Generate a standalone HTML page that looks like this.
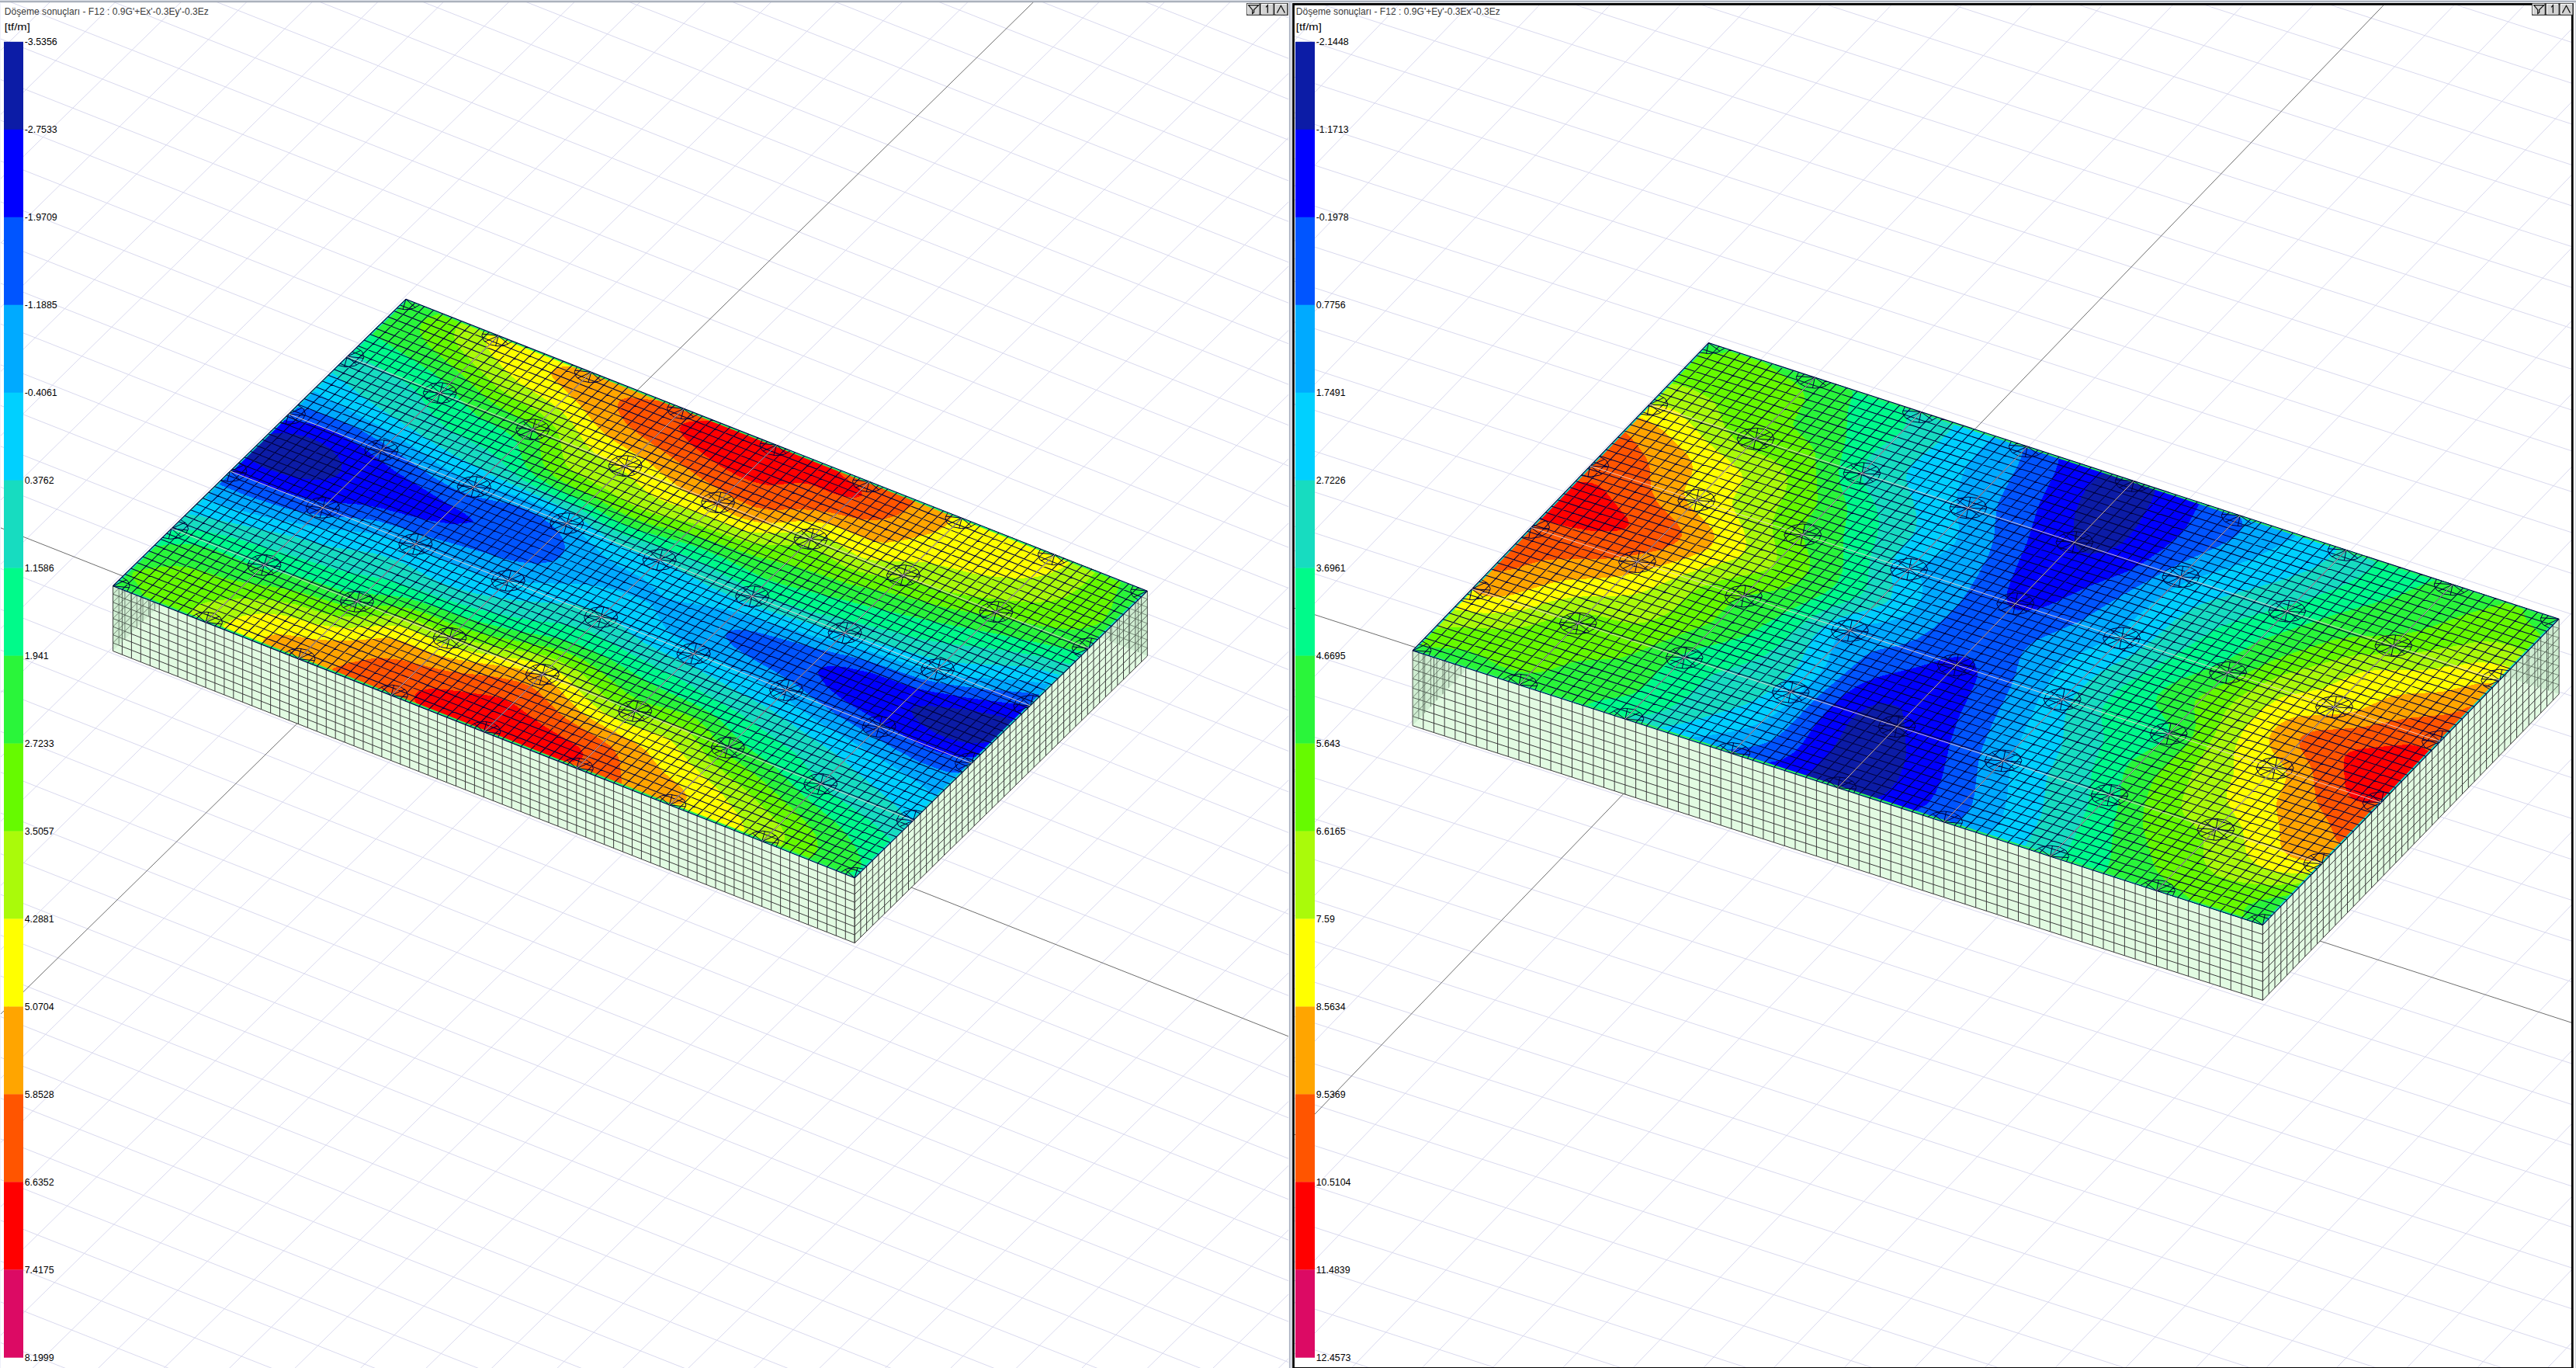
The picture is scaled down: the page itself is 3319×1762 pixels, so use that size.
<!DOCTYPE html><html><head><meta charset="utf-8"><title>Döşeme sonuçları</title><style>html,body{margin:0;padding:0;background:#fff;overflow:hidden}svg{display:block}</style></head><body><svg width="3319" height="1762" viewBox="0 0 3319 1762" font-family="'Liberation Sans', sans-serif">
<rect width="3319" height="1762" fill="#fff"/>
<clipPath id="cL"><rect x="1" y="3" width="1659" height="1759"/></clipPath>
<g clip-path="url(#cL)">
<path d="M37.9 -2454.2L-4544.3 2034.4M98.1 -2430.5L-4484.1 2058.1M158.3 -2406.7L-4423.9 2081.9M218.5 -2382.9L-4363.7 2105.7M278.8 -2359.2L-4303.4 2129.4M339 -2335.4L-4243.2 2153.2M399.2 -2311.6L-4183 2177M459.4 -2287.9L-4122.8 2200.8M519.6 -2264.1L-4062.6 2224.5M579.8 -2240.3L-4002.4 2248.3M640.1 -2216.5L-3942.1 2272.1M700.3 -2192.8L-3881.9 2295.8M760.5 -2169L-3821.7 2319.6M820.7 -2145.2L-3761.5 2343.4M880.9 -2121.5L-3701.3 2367.1M941.2 -2097.7L-3641.1 2390.9M1001.4 -2073.9L-3580.8 2414.7M1061.6 -2050.2L-3520.6 2438.5M1121.8 -2026.4L-3460.4 2462.2M1182 -2002.6L-3400.2 2486M1242.2 -1978.8L-3340 2509.8M1302.5 -1955.1L-3279.7 2533.5M1362.7 -1931.3L-3219.5 2557.3M1422.9 -1907.5L-3159.3 2581.1M1483.1 -1883.8L-3099.1 2604.8M1543.3 -1860L-3038.9 2628.6M1603.5 -1836.2L-2978.7 2652.4M1663.8 -1812.5L-2918.4 2676.2M1724 -1788.7L-2858.2 2699.9M1784.2 -1764.9L-2798 2723.7M1844.4 -1741.1L-2737.8 2747.5M1904.6 -1717.4L-2677.6 2771.2M1964.8 -1693.6L-2617.4 2795M2025.1 -1669.8L-2557.1 2818.8M2085.3 -1646.1L-2496.9 2842.5M2145.5 -1622.3L-2436.7 2866.3M2205.7 -1598.5L-2376.5 2890.1M2265.9 -1574.8L-2316.3 2913.9M2326.1 -1551L-2256.1 2937.6M2386.4 -1527.2L-2195.8 2961.4M2446.6 -1503.4L-2135.6 2985.2M2506.8 -1479.7L-2075.4 3008.9M2567 -1455.9L-2015.2 3032.7M2627.2 -1432.1L-1955 3056.5M2687.4 -1408.4L-1894.8 3080.2M2807.9 -1360.8L-1774.3 3127.8M2868.1 -1337.1L-1714.1 3151.6M2928.3 -1313.3L-1653.9 3175.3M2988.5 -1289.5L-1593.7 3199.1M3048.7 -1265.7L-1533.5 3222.9M3109 -1242L-1473.2 3246.6M3169.2 -1218.2L-1413 3270.4M3229.4 -1194.4L-1352.8 3294.2M3289.6 -1170.7L-1292.6 3317.9M3349.8 -1146.9L-1232.4 3341.7M3410 -1123.1L-1172.2 3365.5M3470.3 -1099.4L-1111.9 3389.2M3530.5 -1075.6L-1051.7 3413M3590.7 -1051.8L-991.5 3436.8M3650.9 -1028L-931.3 3460.6M3711.1 -1004.3L-871.1 3484.3M3771.3 -980.5L-810.9 3508.1M3831.6 -956.7L-750.6 3531.9M3891.8 -933L-690.4 3555.6M3952 -909.2L-630.2 3579.4M4012.2 -885.4L-570 3603.2M4072.4 -861.7L-509.8 3627M4132.7 -837.9L-449.5 3650.7M4192.9 -814.1L-389.3 3674.5M4253.1 -790.3L-329.1 3698.3M4313.3 -766.6L-268.9 3722M4373.5 -742.8L-208.7 3745.8M4433.7 -719L-148.5 3769.6M4494 -695.3L-88.2 3793.3M4554.2 -671.5L-28 3817.1M4614.4 -647.7L32.2 3840.9M4674.6 -624L92.4 3864.7M4734.8 -600.2L152.6 3888.4M4795 -576.4L212.8 3912.2M4855.3 -552.6L273.1 3936M4915.5 -528.9L333.3 3959.7M4975.7 -505.1L393.5 3983.5M5035.9 -481.3L453.7 4007.3M5096.1 -457.6L513.9 4031M5156.3 -433.8L574.1 4054.8M5216.6 -410L634.4 4078.6M5276.8 -386.2L694.6 4102.4M5337 -362.5L754.8 4126.1M5397.2 -338.7L815 4149.9M5457.4 -314.9L875.2 4173.7M37.9 -2454.2L5457.4 -314.9M-0.3 -2416.8L5419.2 -277.5M-38.5 -2379.4L5381.1 -240.1M-76.7 -2342L5342.9 -202.7M-114.8 -2304.6L5304.7 -165.3M-153 -2267.2L5266.5 -127.9M-191.2 -2229.8L5228.3 -90.5M-229.4 -2192.4L5190.1 -53.1M-267.6 -2155L5151.9 -15.7M-305.8 -2117.6L5113.8 21.7M-344 -2080.2L5075.6 59.1M-382.1 -2042.8L5037.4 96.5M-420.3 -2005.4L4999.2 133.9M-458.5 -1968L4961 171.3M-496.7 -1930.6L4922.8 208.7M-534.9 -1893.2L4884.6 246.1M-573.1 -1855.8L4846.5 283.5M-611.2 -1818.4L4808.3 320.9M-649.4 -1781L4770.1 358.4M-687.6 -1743.5L4731.9 395.8M-725.8 -1706.1L4693.7 433.2M-764 -1668.7L4655.5 470.6M-802.2 -1631.3L4617.4 508M-840.4 -1593.9L4579.2 545.4M-878.5 -1556.5L4541 582.8M-916.7 -1519.1L4502.8 620.2M-954.9 -1481.7L4464.6 657.6M-993.1 -1444.3L4426.4 695M-1031.3 -1406.9L4388.2 732.4M-1069.5 -1369.5L4350.1 769.8M-1107.7 -1332.1L4311.9 807.2M-1145.8 -1294.7L4273.7 844.6M-1184 -1257.3L4235.5 882M-1222.2 -1219.9L4197.3 919.4M-1260.4 -1182.5L4159.1 956.8M-1298.6 -1145.1L4120.9 994.2M-1336.8 -1107.7L4082.8 1031.6M-1374.9 -1070.3L4044.6 1069M-1413.1 -1032.9L4006.4 1106.5M-1451.3 -995.4L3968.2 1143.9M-1489.5 -958L3930 1181.3M-1527.7 -920.6L3891.8 1218.7M-1565.9 -883.2L3853.7 1256.1M-1604.1 -845.8L3815.5 1293.5M-1642.2 -808.4L3777.3 1330.9M-1680.4 -771L3739.1 1368.3M-1718.6 -733.6L3700.9 1405.7M-1756.8 -696.2L3662.7 1443.1M-1795 -658.8L3624.5 1480.5M-1833.2 -621.4L3586.4 1517.9M-1871.4 -584L3548.2 1555.3M-1909.5 -546.6L3510 1592.7M-1947.7 -509.2L3471.8 1630.1M-1985.9 -471.8L3433.6 1667.5M-2024.1 -434.4L3395.4 1704.9M-2062.3 -397L3357.2 1742.3M-2100.5 -359.6L3319.1 1779.7M-2138.6 -322.2L3280.9 1817.1M-2176.8 -284.8L3242.7 1854.6M-2215 -247.3L3204.5 1892M-2291.4 -172.5L3128.1 1966.8M-2329.6 -135.1L3090 2004.2M-2367.8 -97.7L3051.8 2041.6M-2405.9 -60.3L3013.6 2079M-2444.1 -22.9L2975.4 2116.4M-2482.3 14.5L2937.2 2153.8M-2520.5 51.9L2899 2191.2M-2558.7 89.3L2860.8 2228.6M-2596.9 126.7L2822.7 2266M-2635.1 164.1L2784.5 2303.4M-2673.2 201.5L2746.3 2340.8M-2711.4 238.9L2708.1 2378.2M-2749.6 276.3L2669.9 2415.6M-2787.8 313.7L2631.7 2453M-2826 351.1L2593.5 2490.4M-2864.2 388.5L2555.4 2527.8M-2902.3 425.9L2517.2 2565.2M-2940.5 463.3L2479 2602.7M-2978.7 500.8L2440.8 2640.1M-3016.9 538.2L2402.6 2677.5M-3055.1 575.6L2364.4 2714.9M-3093.3 613L2326.3 2752.3M-3131.5 650.4L2288.1 2789.7M-3169.6 687.8L2249.9 2827.1M-3207.8 725.2L2211.7 2864.5M-3246 762.6L2173.5 2901.9M-3284.2 800L2135.3 2939.3M-3322.4 837.4L2097.1 2976.7M-3360.6 874.8L2059 3014.1M-3398.8 912.2L2020.8 3051.5M-3436.9 949.6L1982.6 3088.9M-3475.1 987L1944.4 3126.3M-3513.3 1024.4L1906.2 3163.7M-3551.5 1061.8L1868 3201.1M-3589.7 1099.2L1829.8 3238.5M-3627.9 1136.6L1791.7 3275.9M-3666.1 1174L1753.5 3313.3M-3704.2 1211.5L1715.3 3350.8M-3742.4 1248.9L1677.1 3388.2M-3780.6 1286.3L1638.9 3425.6M-3818.8 1323.7L1600.7 3463M-3857 1361.1L1562.6 3500.4M-3895.2 1398.5L1524.4 3537.8M-3933.3 1435.9L1486.2 3575.2M-3971.5 1473.3L1448 3612.6M-4009.7 1510.7L1409.8 3650M-4047.9 1548.1L1371.6 3687.4M-4086.1 1585.5L1333.4 3724.8M-4124.3 1622.9L1295.3 3762.2M-4162.5 1660.3L1257.1 3799.6M-4200.6 1697.7L1218.9 3837M-4238.8 1735.1L1180.7 3874.4M-4277 1772.5L1142.5 3911.8M-4315.2 1809.9L1104.3 3949.2M-4353.4 1847.3L1066.1 3986.6M-4391.6 1884.7L1028 4024M-4429.8 1922.1L989.8 4061.4M-4467.9 1959.6L951.6 4098.9M-4506.1 1997L913.4 4136.3M-4544.3 2034.4L875.2 4173.7" stroke="#d9d9ee" stroke-width="1" fill="none"/>
<path d="M2747.7 -1384.6L-1834.5 3104M-2253.2 -209.9L3166.3 1929.4" stroke="#6e6e6e" stroke-width="1" fill="none"/>
<polygon points="145.5,754.7 1101.2,1130.8 1101.2,1214.6 145.5,838.5" fill="#e0fbe0" fill-opacity="0.93"/>
<polygon points="1101.2,1130.8 1478.3,761.2 1478.3,845 1101.2,1214.6" fill="#e0fbe0" fill-opacity="0.93"/>
<path d="M145.5 754.7v83.8M157.4 759.4v83.8M169.4 764.1v83.8M181.3 768.8v83.8M193.3 773.5v83.8M205.2 778.2v83.8M217.2 782.9v83.8M229.1 787.6v83.8M241.1 792.3v83.8M253 797v83.8M265 801.7v83.8M276.9 806.4v83.8M288.9 811.1v83.8M300.8 815.8v83.8M312.7 820.5v83.8M324.7 825.2v83.8M336.6 829.9v83.8M348.6 834.6v83.8M360.5 839.3v83.8M372.5 844v83.8M384.4 848.7v83.8M396.4 853.4v83.8M408.3 858.1v83.8M420.3 862.8v83.8M432.2 867.5v83.8M444.2 872.2v83.8M456.1 876.9v83.8M468 881.6v83.8M480 886.3v83.8M491.9 891v83.8M503.9 895.7v83.8M515.8 900.4v83.8M527.8 905.1v83.8M539.7 909.8v83.8M551.7 914.5v83.8M563.6 919.2v83.8M575.6 923.9v83.8M587.5 928.6v83.8M599.5 933.3v83.8M611.4 938v83.8M623.4 942.8v83.8M635.3 947.5v83.8M647.2 952.2v83.8M659.2 956.9v83.8M671.1 961.6v83.8M683.1 966.3v83.8M695 971v83.8M707 975.7v83.8M718.9 980.4v83.8M730.9 985.1v83.8M742.8 989.8v83.8M754.8 994.5v83.8M766.7 999.2v83.8M778.7 1003.9v83.8M790.6 1008.6v83.8M802.5 1013.3v83.8M814.5 1018v83.8M826.4 1022.7v83.8M838.4 1027.4v83.8M850.3 1032.1v83.8M862.3 1036.8v83.8M874.2 1041.5v83.8M886.2 1046.2v83.8M898.1 1050.9v83.8M910.1 1055.6v83.8M922 1060.3v83.8M934 1065v83.8M945.9 1069.7v83.8M957.8 1074.4v83.8M969.8 1079.1v83.8M981.7 1083.8v83.8M993.7 1088.5v83.8M1005.6 1093.2v83.8M1017.6 1097.9v83.8M1029.5 1102.6v83.8M1041.5 1107.3v83.8M1053.4 1112v83.8M1065.4 1116.7v83.8M1077.3 1121.4v83.8M1089.3 1126.1v83.8M1101.2 1130.8v83.8M1101.2 1130.8v83.8M1108.9 1123.3v83.8M1116.6 1115.7v83.8M1124.3 1108.2v83.8M1132 1100.6v83.8M1139.7 1093.1v83.8M1147.4 1085.5v83.8M1155.1 1078v83.8M1162.8 1070.5v83.8M1170.5 1062.9v83.8M1178.2 1055.4v83.8M1185.9 1047.8v83.8M1193.6 1040.3v83.8M1201.2 1032.7v83.8M1208.9 1025.2v83.8M1216.6 1017.7v83.8M1224.3 1010.1v83.8M1232 1002.6v83.8M1239.7 995v83.8M1247.4 987.5v83.8M1255.1 979.9v83.8M1262.8 972.4v83.8M1270.5 964.9v83.8M1278.2 957.3v83.8M1285.9 949.8v83.8M1293.6 942.2v83.8M1301.3 934.7v83.8M1309 927.1v83.8M1316.7 919.6v83.8M1324.4 912.1v83.8M1332.1 904.5v83.8M1339.8 897v83.8M1347.5 889.4v83.8M1355.2 881.9v83.8M1362.9 874.3v83.8M1370.6 866.8v83.8M1378.3 859.3v83.8M1385.9 851.7v83.8M1393.6 844.2v83.8M1401.3 836.6v83.8M1409 829.1v83.8M1416.7 821.5v83.8M1424.4 814v83.8M1432.1 806.5v83.8M1439.8 798.9v83.8M1447.5 791.4v83.8M1455.2 783.8v83.8M1462.9 776.3v83.8M1470.6 768.7v83.8M1478.3 761.2v83.8M145.5 765.2L1101.2 1141.3L1478.3 771.7M145.5 775.7L1101.2 1151.8L1478.3 782.2M145.5 786.1L1101.2 1162.2L1478.3 792.6M145.5 796.6L1101.2 1172.7L1478.3 803.1M145.5 807.1L1101.2 1183.2L1478.3 813.6M145.5 817.6L1101.2 1193.6L1478.3 824.1M145.5 828L1101.2 1204.1L1478.3 834.5M145.5 838.5L1101.2 1214.6L1478.3 845" stroke="#3c3c3c" stroke-width="1" fill="none"/>
<clipPath id="tLb"><polygon points="145.5,754.7 145.5,838.5 206.6,778.7"/></clipPath>
<g clip-path="url(#tLb)">
<polygon points="145.5,754.7 145.5,838.5 206.6,778.7" fill="#9fc8a6" fill-opacity="0.28"/>
<path d="M153.2 747.2v83.8M160.9 739.6v83.8M168.6 732.1v83.8M176.3 724.5v83.8M184 717v83.8M191.7 709.5v83.8M199.4 701.9v83.8M207.1 694.4v83.8M145.5 765.2L221 691.3M145.5 775.7L221 701.8M145.5 786.1L221 712.2M145.5 796.6L221 722.7M145.5 807.1L221 733.2M145.5 817.6L221 743.7M145.5 828L221 754.1" stroke="#4a5a4c" stroke-width="0.9" fill="none" opacity="0.75"/>
</g>
<clipPath id="tLd"><polygon points="1478.3,761.2 1478.3,845 1417.3,821"/></clipPath>
<g clip-path="url(#tLd)">
<polygon points="1478.3,761.2 1478.3,845 1417.3,821" fill="#9fc8a6" fill-opacity="0.28"/>
<path d="M1466.4 756.5v83.8M1454.4 751.8v83.8M1442.5 747.1v83.8M1430.5 742.4v83.8M1418.6 737.7v83.8M1406.6 733v83.8M1394.7 728.3v83.8M1382.8 723.6v83.8M1370.8 718.9v83.8M1358.9 714.2v83.8M1346.9 709.5v83.8M1335 704.8v83.8M1323 700.1v83.8M1311.1 695.4v83.8M1299.2 690.7v83.8M1478.3 771.7L1287.2 696.5M1478.3 782.2L1287.2 707M1478.3 792.6L1287.2 717.4M1478.3 803.1L1287.2 727.9M1478.3 813.6L1287.2 738.4M1478.3 824.1L1287.2 748.9M1478.3 834.5L1287.2 759.3" stroke="#4a5a4c" stroke-width="0.9" fill="none" opacity="0.75"/>
</g>
<g shape-rendering="crispEdges">
<polygon points="522.9,385.3 1478.3,761.2 1101.2,1130.8 145.5,754.7" fill="#0c1ca6"/>
<path d="M523 385l955 376l-171 168l-16-6l-18-4l-29-5l-26-3l-22-2l-16 1l-6 4l3 9l12 11l14 9l15 7l18 5l10 2l19 0l16-3l-180 177l-955-376l170-167l9 6l19 10l25 8l18 4l17 2l15-1l11-2l7-5l3-5l0-7l-4-9l-10-11l-13-8l-16-7l-18-4l-21-1l-13 1l178-174z" fill="#0000ff" fill-rule="evenodd"/>
<path d="M523 385l955 376l-151 148l-79-10l-47-8l-27-6l-50-18l-27-6l-10-2l-20-1l-11 3l-2 6l5 9l9 11l14 11l13 9l77 45l22 11l25 9l18 3l23 0l-159 156l-955-376l150-148l64 25l34 10l29 5l32 2l19 2l19 4l53 14l18 3l18 3l17-1l11-2l-5-6l-7-5l-21-12l-68-42l-38-28l-21-13l-22-11l-25-9l-18-3l-21-2l159-156z" fill="#0055ff" fill-rule="evenodd"/>
<path d="M523 385l955 376l-136 134l-20-3l-62-5l-48-7l-27-6l-67-23l-71-17l-61-17l-16-4l-22-2l-11 3l-2 6l7 10l5 4l18 12l51 29l44 33l20 14l77 45l29 15l16 6l17 6l20 2l-138 135l-955-376l134-132l39 16l51 16l27 6l15 3l56 4l19 3l27 8l44 14l50 14l51 15l19 3l16 1l13-2l10-3l6-5l4-6l1-6l-2-8l-2-4l-3-5l-10-11l-16-11l-15-8l-16-6l-54-12l-24-9l-29-16l-66-45l-28-16l-23-10l-24-10l-16-5l-19-4l142-139z" fill="#00aaff" fill-rule="evenodd"/>
<path d="M523 385l955 376l-123 121l-19-3l-20-3l-73-4l-39-6l-26-8l-58-19l-70-19l-93-29l-27-7l-48-8l-18-4l-8-3l-6-4l-9-9l-14-12l-30-15l-14-9l-12-10l-26-27l-13-11l-13-9l-14-8l-23-10l-25-9l-42-13l-23-10l-22-12l-46-31l-27-17l-95-50l121-118zM767 754l13 3l17 4l25 9l15 7l5 6l12 21l6 8l11 8l21 13l87 46l21 12l52 37l62 37l44 27l28 18l17 14l3 4l-105 103l-955-376l117-115l14 7l17 6l44 12l74 15l60 6l27 6l33 12l70 30l26 8l17 4l20 3l20 2l55 1l27 2z" fill="#00d0ff" fill-rule="evenodd"/>
<path d="M523 385l955 376l-110 109l-27-7l-22-4l-27-2l-59-3l-33-6l-164-47l-42-13l-41-15l-38-17l-50-28l-15-7l-41-14l-16-7l-13-9l-32-23l-21-13l-22-11l-69-31l-51-27l-21-12l-75-48l-23-16l-39-31l96-94zM741 779l22 5l16 7l13 8l25 20l13 9l67 33l93 51l85 58l78 66l10 12l8 14l-70 69l-955-376l94-93l20 3l109 24l62 16l48 7l18 5l24 9l36 19l15 7l17 6l26 7l47 8l21 2l42 2l16 2z" fill="#17dcc0" fill-rule="evenodd"/>
<path d="M523 385l955 376l-97 95l-44-11l-28-5l-34-5l-46-5l-38-6l-71-18l-73-18l-32-10l-25-9l-30-14l-50-27l-23-11l-24-9l-43-13l-16-6l-14-7l-48-30l-52-25l-15-8l-17-13l-19-18l-12-9l-37-19l-9-5l-11-8l-6-6l-9-10l-13-19l-6-8l-12-10l-20-13l-52-27l71-69zM740 807l17 5l15 7l42 24l59 30l80 46l69 49l11 11l22 29l8 7l12 10l33 22l19 15l22 22l-48 47l-955-376l71-70l13-2l23 0l19 3l27 6l136 42l18 4l38 7l17 4l75 26l34 10l45 10l22 4l37 4l19 4z" fill="#00fa8a" fill-rule="evenodd"/>
<path d="M523 385l955 376l-80 78l-8-1l-29-5l-64-14l-93-18l-73-17l-63-16l-52-13l-17-5l-16-6l-52-26l-31-13l-26-8l-44-12l-16-5l-23-11l-35-21l-44-21l-21-13l-6-5l-8-9l-4-9l-6-19l-4-7l-6-5l-8-6l-27-14l-7-4l-12-11l-24-26l-20-18l-20-13l-61-39l45-44zM747 831l17 7l15 7l70 41l46 21l21 11l17 14l17 19l11 10l39 28l33 34l48 40l10 12l10 14l8 17l1 7l-3 6l-9 4l-10 2l-942-370l51-51l26-3l22 0l10 1l18 5l16 6l31 13l16 6l54 12l51 17l19 3l42 3l22 3l23 7l49 17l26 8l36 9l65 12l24 8z" fill="#2af53a" fill-rule="evenodd"/>
<path d="M568 403l877 345l-5 12l-9 25l-7 11l-5 5l-7 4l-10 3l-19 3l-11-1l-27-3l-58-12l-47-8l-28-6l-52-14l-63-14l-67-22l-55-14l-81-28l-54-13l-25-9l-15-7l-35-20l-37-18l-14-8l-11-11l-4-8l-2-8l-2-21l-3-8l-4-6l-6-6l-6-4l-36-20l-13-9l-34-32l-39-34l-9-11l-2-5l-2-3l0-7l3-6l6-5l18-7zM694 831l18 4l17 5l23 10l20 13l36 30l14 8l16 6l27 7l17 5l15 7l6 5l11 11l14 19l11 12l32 23l12 10l51 48l11 13l6 9l1 4l1 4l1 7l-2 6l-4 6l-7 4l-855-336l-7-16l-9-12l1-6l10-3l26-4l16-1l14 1l19 4l34 11l18 4l58 9l18 4l42 13l18 5l21 1l34-1l19 2l10 2l18 5l47 19l17 5l27 7l57 11z" fill="#66fa00" fill-rule="evenodd"/>
<path d="M597 415l816 320l-15 16l-11 9l-14 9l-9 3l-11 3l-23 1l-35-3l-36-4l-29-5l-60-17l-49-7l-18-5l-16-6l-35-21l-7-3l-9-2l-11-1l-35 0l-27-4l-17-5l-50-18l-53-13l-17-6l-14-7l-35-21l-29-15l-14-9l-4-4l-4-9l-4-22l-2-8l-4-9l-8-10l-12-10l-42-24l-13-9l-31-30l-19-22l-5-9l-1-7l2-7l4-5l6-4zM681 840l21 4l16 6l22 11l13 9l22 23l11 10l14 9l7 4l16 6l46 10l14 7l12 11l13 20l10 12l42 35l34 33l10 12l3 4l4 8l0 7l-3 6l-5 5l-761-299l4-6l5-5l8-4l10-3l12-2l31-2l39 2l28 5l42 13l19 3l22 0l35-1l21 1l18 5l47 20l16 5l28 6l54 10z" fill="#aafa0a" fill-rule="evenodd"/>
<path d="M632 428l749 295l-13 9l-17 7l-10 3l-12 2l-18 1l-26-2l-30-4l-44-11l-19-4l-64-2l-18-4l-8-4l-34-21l-16-6l-21-2l-43 2l-23-2l-17-5l-48-19l-42-14l-15-7l-7-4l-30-27l-40-25l-11-11l-17-27l-8-9l-8-8l-12-10l-41-26l-17-15l-18-21l-6-9l-2-8l0-3l1-4l5-5zM669 849l23 5l16 5l8 4l15 10l31 33l19 14l22 11l50 16l8 4l6 5l24 29l27 25l11 11l8 10l15 20l5 9l2 8l-2 6l-671-264l4-6l6-4l8-4l10-3l13-2l16-1l25 3l40 11l19 3l21 2l41-3l17 0l10 1l17 6l38 17l17 5l28 6l53 8z" fill="#ffff00" fill-rule="evenodd"/>
<path d="M726 472l19 1l483 190l-7 11l-5 5l-7 4l-9 4l-32 8l-12 2l-15 2l-11-1l-9-2l-39-16l-17-6l-10-1l-21-2l-47 3l-19-3l-17-5l-52-26l-22-11l-13-10l-30-25l-13-8l-28-17l-13-9l-11-11l-25-31l-31-30l-4-8l5-5l12-3zM662 860l28 7l15 7l12 10l21 23l11 11l21 13l49 26l14 10l19 25l27 23l6 10l-1 6l-7 5l-15 1l-524-206l1-7l5-5l12-2l16 1l38 6l21 1l23 0l36-3l11 0l18 4l40 16l17 5l28 5l58 8z" fill="#ffa500" fill-rule="evenodd"/>
<path d="M831 514l30 4l318 126l-3 5l-5 5l-14 9l-8 3l-11 3l-13 1l-20-2l-36-8l-20-3l-21-1l-35 1l-17-3l-10-3l-23-11l-41-25l-45-32l-33-23l-16-13l-8-11l-4-8l0-7l3-6l11-3l21 2zM640 872l28 6l16 6l12 9l22 23l12 10l42 25l13 9l7 7l5 9l2 8l1 16l2 13l-377-148l6-5l19-6l24-5l14-2l9 1l20 2l36 9l27 6l60 7z" fill="#ff5500" fill-rule="evenodd"/>
<path d="M902 542l18 0l158 62l0 2l6 6l25 18l2 8l-9 3l-13-1l-17-5l-24-10l-8-2l-11-1l-25 2l-11 1l-10-1l-18-5l-16-7l-20-11l-20-14l-19-15l-11-12l-4-8l4-6l9-3l14-1zM625 895l20 4l16 7l38 28l42 25l6 4l4 7l1 2l-3 6l-11 3l-24-3l-176-69l-4-8l1-7l6-5l4 0l9-2l19 1l52 7z" fill="#ff0000" fill-rule="evenodd"/>
</g>
<clipPath id="pL"><polygon points="522.9,385.3 1478.3,761.2 1101.2,1130.8 145.5,754.7"/></clipPath>
<g clip-path="url(#pL)">
<path d="M145.5 754.7L1101.2 1130.8" stroke="#35f04a" stroke-width="5.5" fill="none"/>
<path d="M522.9 385.3L1478.3 761.2" stroke="#35f04a" stroke-width="4.5" fill="none"/>
<path d="M522.9 385.3L145.5 754.7" stroke="#19d8c8" stroke-width="4" fill="none"/>
<path d="M1478.3 761.2L1101.2 1130.8" stroke="#19d8c8" stroke-width="4.5" fill="none"/>
<path d="M145.5 754.7L1101.2 1130.8" stroke="#00c8f0" stroke-width="2" fill="none"/>
<path d="M522.9 385.3L1478.3 761.2" stroke="#00c8f0" stroke-width="1.6" fill="none"/>
<path d="M541.1 392.4L532.8 397.2L521.8 398.8L511.2 396.8L503.7 391.6L501.3 384.8L504.7 378.2L513 373.4L524 371.8L534.6 373.8L542.1 379L544.5 385.8L541.1 392.4M522.9 385.3L535.2 396.3M522.9 385.3L519.1 398.6M522.9 385.3L505.2 393.2M522.9 385.3L501.6 383.1M522.9 385.3L510.6 374.3M522.9 385.3L526.7 372M522.9 385.3L540.6 377.4M522.9 385.3L544.2 387.5M465.6 466.3L457.3 471.1L446.4 472.7L435.7 470.6L428.2 465.5L425.8 458.7L429.3 452L437.5 447.3L448.5 445.7L459.1 447.7L466.6 452.8L469 459.6L465.6 466.3M447.4 459.2L459.8 470.1M447.4 459.2L443.6 472.5M447.4 459.2L429.7 467.1M447.4 459.2L426.2 457M447.4 459.2L435.1 448.2M447.4 459.2L451.2 445.9M447.4 459.2L465.1 451.3M447.4 459.2L468.7 461.4M390.1 540.2L381.8 545L370.9 546.5L360.2 544.5L352.7 539.4L350.4 532.6L353.8 525.9L362.1 521.1L373 519.6L383.6 521.6L391.1 526.7L393.5 533.5L390.1 540.2M371.9 533.1L384.3 544M371.9 533.1L368.1 546.4M371.9 533.1L354.2 540.9M371.9 533.1L350.7 530.9M371.9 533.1L359.6 522.1M371.9 533.1L375.7 519.7M371.9 533.1L389.7 525.2M371.9 533.1L393.2 535.2M314.6 614.1L306.3 618.9L295.4 620.4L284.8 618.4L277.2 613.3L274.9 606.5L278.3 599.8L286.6 595L297.5 593.5L308.2 595.5L315.7 600.6L318 607.4L314.6 614.1M296.5 606.9L308.8 617.9M296.5 606.9L292.7 620.3M296.5 606.9L278.7 614.8M296.5 606.9L275.2 604.8M296.5 606.9L284.1 596M296.5 606.9L300.3 593.6M296.5 606.9L314.2 599.1M296.5 606.9L317.7 609.1M239.1 688L230.9 692.7L219.9 694.3L209.3 692.3L201.8 687.2L199.4 680.4L202.8 673.7L211.1 668.9L222 667.3L232.7 669.4L240.2 674.5L242.6 681.3L239.1 688M221 680.8L233.3 691.8M221 680.8L217.2 694.1M221 680.8L203.3 688.7M221 680.8L199.7 678.6M221 680.8L208.6 669.9M221 680.8L224.8 667.5M221 680.8L238.7 672.9M221 680.8L242.2 683M163.7 761.8L155.4 766.6L144.4 768.2L133.8 766.2L126.3 761L123.9 754.2L127.3 747.6L135.6 742.8L146.6 741.2L157.2 743.2L164.7 748.4L167.1 755.2L163.7 761.8M145.5 754.7L157.8 765.7M145.5 754.7L141.7 768M145.5 754.7L127.8 762.6M145.5 754.7L124.2 752.5M145.5 754.7L133.2 743.7M145.5 754.7L149.3 741.4M145.5 754.7L163.2 746.8M145.5 754.7L166.8 756.9M660.5 439.4L652.2 444.2L641.3 445.8L630.6 443.7L623.1 438.6L620.8 431.8L624.2 425.1L632.5 420.4L643.4 418.8L654 420.8L661.5 425.9L663.9 432.7L660.5 439.4M642.3 432.3L654.7 443.2M642.3 432.3L638.5 445.6M642.3 432.3L624.6 440.2M642.3 432.3L621.1 430.1M642.3 432.3L630 421.3M642.3 432.3L646.1 419M642.3 432.3L660 424.4M642.3 432.3L663.6 434.5M585 513.3L576.7 518.1L565.8 519.7L555.2 517.6L547.6 512.5L545.3 505.7L548.7 499L557 494.3L567.9 492.7L578.6 494.7L586.1 499.8L588.4 506.6L585 513.3M566.9 506.2L579.2 517.1M566.9 506.2L563 519.5M566.9 506.2L549.1 514M566.9 506.2L545.6 504M566.9 506.2L554.5 495.2M566.9 506.2L570.7 492.9M566.9 506.2L584.6 498.3M566.9 506.2L588.1 508.4M509.5 587.2L501.3 592L490.3 593.5L479.7 591.5L472.2 586.4L469.8 579.6L473.2 572.9L481.5 568.1L492.4 566.6L503.1 568.6L510.6 573.7L513 580.5L509.5 587.2M491.4 580.1L503.7 591M491.4 580.1L487.6 593.4M491.4 580.1L473.7 587.9M491.4 580.1L470.1 577.9M491.4 580.1L479 569.1M491.4 580.1L495.2 566.7M491.4 580.1L509.1 572.2M491.4 580.1L512.6 582.2M434.1 661.1L425.8 665.9L414.9 667.4L404.2 665.4L396.7 660.3L394.3 653.5L397.8 646.8L406 642L417 640.5L427.6 642.5L435.1 647.6L437.5 654.4L434.1 661.1M415.9 653.9L428.3 664.9M415.9 653.9L412.1 667.3M415.9 653.9L398.2 661.8M415.9 653.9L394.6 651.8M415.9 653.9L403.6 643M415.9 653.9L419.7 640.6M415.9 653.9L433.6 646.1M415.9 653.9L437.2 656.1M358.6 735L350.3 739.7L339.4 741.3L328.7 739.3L321.2 734.2L318.9 727.4L322.3 720.7L330.6 715.9L341.5 714.3L352.1 716.4L359.6 721.5L362 728.3L358.6 735M340.4 727.8L352.8 738.8M340.4 727.8L336.6 741.1M340.4 727.8L322.7 735.7M340.4 727.8L319.2 725.6M340.4 727.8L328.1 716.9M340.4 727.8L344.2 714.5M340.4 727.8L358.2 720M340.4 727.8L361.7 730M283.1 808.9L274.8 813.6L263.9 815.2L253.3 813.2L245.8 808.1L243.4 801.3L246.8 794.6L255.1 789.8L266 788.2L276.7 790.3L284.2 795.4L286.5 802.2L283.1 808.9M265 801.7L277.3 812.7M265 801.7L261.2 815M265 801.7L247.2 809.6M265 801.7L243.7 799.5M265 801.7L252.6 790.7M265 801.7L268.8 788.4M265 801.7L282.7 793.8M265 801.7L286.2 803.9M779.9 486.4L771.6 491.2L760.7 492.8L750.1 490.7L742.5 485.6L740.2 478.8L743.6 472.1L751.9 467.4L762.8 465.8L773.4 467.8L781 472.9L783.3 479.7L779.9 486.4M761.8 479.3L774.1 490.2M761.8 479.3L757.9 492.6M761.8 479.3L744 487.2M761.8 479.3L740.5 477.1M761.8 479.3L749.4 468.3M761.8 479.3L765.6 466M761.8 479.3L779.5 471.4M761.8 479.3L783 481.5M704.4 560.3L696.2 565.1L685.2 566.7L674.6 564.6L667.1 559.5L664.7 552.7L668.1 546L676.4 541.3L687.3 539.7L698 541.7L705.5 546.8L707.9 553.6L704.4 560.3M686.3 553.2L698.6 564.1M686.3 553.2L682.5 566.5M686.3 553.2L668.6 561M686.3 553.2L665 551M686.3 553.2L673.9 542.2M686.3 553.2L690.1 539.8M686.3 553.2L704 545.3M686.3 553.2L707.5 555.3M629 634.2L620.7 639L609.8 640.5L599.1 638.5L591.6 633.4L589.2 626.6L592.7 619.9L600.9 615.1L611.9 613.6L622.5 615.6L630 620.7L632.4 627.5L629 634.2M610.8 627.1L623.2 638M610.8 627.1L607 640.4M610.8 627.1L593.1 634.9M610.8 627.1L589.6 624.9M610.8 627.1L598.5 616.1M610.8 627.1L614.6 613.7M610.8 627.1L628.5 619.2M610.8 627.1L632.1 629.2M553.5 708.1L545.2 712.9L534.3 714.4L523.7 712.4L516.1 707.3L513.8 700.5L517.2 693.8L525.5 689L536.4 687.5L547.1 689.5L554.6 694.6L556.9 701.4L553.5 708.1M535.4 700.9L547.7 711.9M535.4 700.9L531.6 714.3M535.4 700.9L517.6 708.8M535.4 700.9L514.1 698.8M535.4 700.9L523 690M535.4 700.9L539.2 687.6M535.4 700.9L553.1 693.1M535.4 700.9L556.6 703.1M478 782L469.8 786.7L458.8 788.3L448.2 786.3L440.7 781.2L438.3 774.4L441.7 767.7L450 762.9L460.9 761.3L471.6 763.4L479.1 768.5L481.5 775.3L478 782M459.9 774.8L472.2 785.8M459.9 774.8L456.1 788.2M459.9 774.8L442.2 782.7M459.9 774.8L438.6 772.7M459.9 774.8L447.5 763.9M459.9 774.8L463.7 761.5M459.9 774.8L477.6 767M459.9 774.8L481.2 777M402.6 855.9L394.3 860.6L383.4 862.2L372.7 860.2L365.2 855.1L362.9 848.3L366.3 841.6L374.5 836.8L385.5 835.2L396.1 837.3L403.6 842.4L406 849.2L402.6 855.9M384.4 848.7L396.8 859.7M384.4 848.7L380.6 862M384.4 848.7L366.7 856.6M384.4 848.7L363.2 846.5M384.4 848.7L372.1 837.8M384.4 848.7L388.2 835.4M384.4 848.7L402.1 840.8M384.4 848.7L405.7 850.9M899.3 533.4L891 538.2L880.1 539.8L869.5 537.7L862 532.6L859.6 525.8L863 519.1L871.3 514.4L882.2 512.8L892.9 514.8L900.4 519.9L902.7 526.7L899.3 533.4M881.2 526.3L893.5 537.2M881.2 526.3L877.4 539.6M881.2 526.3L863.5 534.1M881.2 526.3L859.9 524.1M881.2 526.3L868.8 515.3M881.2 526.3L885 512.9M881.2 526.3L898.9 518.4M881.2 526.3L902.4 528.4M823.9 607.3L815.6 612.1L804.7 613.6L794 611.6L786.5 606.5L784.1 599.7L787.6 593L795.8 588.2L806.8 586.7L817.4 588.7L824.9 593.8L827.3 600.6L823.9 607.3M805.7 600.2L818.1 611.1M805.7 600.2L801.9 613.5M805.7 600.2L788 608M805.7 600.2L784.5 598M805.7 600.2L793.4 589.2M805.7 600.2L809.5 586.8M805.7 600.2L823.4 592.3M805.7 600.2L827 602.3M748.4 681.2L740.1 686L729.2 687.5L718.6 685.5L711.1 680.4L708.7 673.6L712.1 666.9L720.4 662.1L731.3 660.6L742 662.6L749.5 667.7L751.8 674.5L748.4 681.2M730.3 674.1L742.6 685M730.3 674.1L726.5 687.4M730.3 674.1L712.5 681.9M730.3 674.1L709 671.9M730.3 674.1L717.9 663.1M730.3 674.1L734.1 660.7M730.3 674.1L748 666.2M730.3 674.1L751.5 676.2M673 755.1L664.7 759.9L653.8 761.4L643.1 759.4L635.6 754.3L633.2 747.5L636.6 740.8L644.9 736L655.9 734.5L666.5 736.5L674 741.6L676.4 748.4L673 755.1M654.8 747.9L667.1 758.9M654.8 747.9L651 761.3M654.8 747.9L637.1 755.8M654.8 747.9L633.5 745.8M654.8 747.9L642.5 737M654.8 747.9L658.6 734.6M654.8 747.9L672.5 740.1M654.8 747.9L676.1 750.1M597.5 829L589.2 833.8L578.3 835.3L567.6 833.3L560.1 828.2L557.8 821.4L561.2 814.7L569.5 809.9L580.4 808.4L591 810.4L598.6 815.5L600.9 822.3L597.5 829M579.3 821.8L591.7 832.8M579.3 821.8L575.5 835.2M579.3 821.8L561.6 829.7M579.3 821.8L558.1 819.7M579.3 821.8L567 810.9M579.3 821.8L583.1 808.5M579.3 821.8L597.1 814M579.3 821.8L600.6 824M522 902.9L513.8 907.7L502.8 909.2L492.2 907.2L484.7 902.1L482.3 895.3L485.7 888.6L494 883.8L504.9 882.2L515.6 884.3L523.1 889.4L525.5 896.2L522 902.9M503.9 895.7L516.2 906.7M503.9 895.7L500.1 909.1M503.9 895.7L486.2 903.6M503.9 895.7L482.6 893.6M503.9 895.7L491.5 884.8M503.9 895.7L507.7 882.4M503.9 895.7L521.6 887.9M503.9 895.7L525.1 897.9M1018.8 580.4L1010.5 585.2L999.5 586.7L988.9 584.7L981.4 579.6L979 572.8L982.4 566.1L990.7 561.3L1001.7 559.8L1012.3 561.8L1019.8 566.9L1022.2 573.7L1018.8 580.4M1000.6 573.2L1012.9 584.2M1000.6 573.2L996.8 586.6M1000.6 573.2L982.9 581.1M1000.6 573.2L979.3 571.1M1000.6 573.2L988.3 562.3M1000.6 573.2L1004.4 559.9M1000.6 573.2L1018.3 565.4M1000.6 573.2L1021.9 575.4M943.3 654.3L935 659.1L924.1 660.6L913.5 658.6L905.9 653.5L903.6 646.7L907 640L915.3 635.2L926.2 633.7L936.8 635.7L944.4 640.8L946.7 647.6L943.3 654.3M925.1 647.2L937.5 658.1M925.1 647.2L921.4 660.5M925.1 647.2L907.4 655M925.1 647.2L903.9 645M925.1 647.2L912.8 636.2M925.1 647.2L929 633.8M925.1 647.2L942.9 639.3M925.1 647.2L946.4 649.3M867.9 728.2L859.6 733L848.6 734.5L838 732.5L830.5 727.4L828.1 720.6L831.5 713.9L839.8 709.1L850.8 707.6L861.4 709.6L868.9 714.7L871.3 721.5L867.9 728.2M849.7 721.1L862 732M849.7 721.1L845.9 734.4M849.7 721.1L832 728.9M849.7 721.1L828.4 718.9M849.7 721.1L837.4 710.1M849.7 721.1L853.5 707.7M849.7 721.1L867.4 713.2M849.7 721.1L871 723.2M792.4 802.1L784.1 806.9L773.2 808.4L762.6 806.4L755 801.3L752.7 794.5L756.1 787.8L764.4 783L775.3 781.5L785.9 783.5L793.5 788.6L795.8 795.4L792.4 802.1M774.2 795L786.6 805.9M774.2 795L770.5 808.3M774.2 795L756.5 802.8M774.2 795L753 792.8M774.2 795L761.9 784M774.2 795L778 781.6M774.2 795L792 787.1M774.2 795L795.5 797.1M717 876L708.7 880.8L697.8 882.3L687.1 880.3L679.6 875.2L677.2 868.4L680.6 861.7L688.9 856.9L699.8 855.4L710.5 857.4L718 862.5L720.4 869.3L717 876M698.8 868.9L711.1 879.8M698.8 868.9L695 882.2M698.8 868.9L681.1 876.7M698.8 868.9L677.5 866.7M698.8 868.9L686.5 857.9M698.8 868.9L702.6 855.5M698.8 868.9L716.5 861M698.8 868.9L720.1 871M641.5 949.9L633.2 954.7L622.3 956.2L611.7 954.2L604.1 949.1L601.8 942.3L605.2 935.6L613.5 930.8L624.4 929.3L635 931.3L642.6 936.4L644.9 943.2L641.5 949.9M623.4 942.8L635.7 953.7M623.4 942.8L619.6 956.1M623.4 942.8L605.6 950.6M623.4 942.8L602.1 940.6M623.4 942.8L611 931.8M623.4 942.8L627.1 929.4M623.4 942.8L641.1 934.9M623.4 942.8L644.6 944.9M1138.2 627.4L1129.9 632.2L1119 633.7L1108.3 631.7L1100.8 626.6L1098.5 619.8L1101.9 613.1L1110.2 608.3L1121.1 606.7L1131.7 608.8L1139.2 613.9L1141.6 620.7L1138.2 627.4M1120 620.2L1132.4 631.2M1120 620.2L1116.2 633.6M1120 620.2L1102.3 628.1M1120 620.2L1098.8 618.1M1120 620.2L1107.7 609.3M1120 620.2L1123.8 606.9M1120 620.2L1137.7 612.4M1120 620.2L1141.3 622.4M1062.7 701.3L1054.5 706.1L1043.5 707.6L1032.9 705.6L1025.4 700.5L1023 693.7L1026.4 687L1034.7 682.2L1045.6 680.7L1056.3 682.7L1063.8 687.8L1066.2 694.6L1062.7 701.3M1044.6 694.1L1056.9 705.1M1044.6 694.1L1040.8 707.5M1044.6 694.1L1026.9 702M1044.6 694.1L1023.3 692M1044.6 694.1L1032.2 683.2M1044.6 694.1L1048.4 680.8M1044.6 694.1L1062.3 686.3M1044.6 694.1L1065.8 696.3M987.3 775.2L979 780L968.1 781.5L957.4 779.5L949.9 774.4L947.6 767.6L951 760.9L959.3 756.1L970.2 754.6L980.8 756.6L988.3 761.7L990.7 768.5L987.3 775.2M969.1 768L981.5 779M969.1 768L965.3 781.4M969.1 768L951.4 775.9M969.1 768L947.9 765.9M969.1 768L956.8 757.1M969.1 768L972.9 754.7M969.1 768L986.9 760.2M969.1 768L990.4 770.2M911.9 849.1L903.6 853.9L892.6 855.4L882 853.4L874.5 848.3L872.1 841.5L875.5 834.8L883.8 830L894.7 828.5L905.4 830.5L912.9 835.6L915.3 842.4L911.9 849.1M893.7 842L906 852.9M893.7 842L889.9 855.3M893.7 842L876 849.8M893.7 842L872.4 839.8M893.7 842L881.4 831M893.7 842L897.5 828.6M893.7 842L911.4 834.1M893.7 842L915 844.1M836.4 923L828.1 927.8L817.2 929.4L806.6 927.3L799 922.2L796.7 915.4L800.1 908.7L808.4 903.9L819.3 902.4L829.9 904.4L837.5 909.5L839.8 916.3L836.4 923M818.3 915.9L830.6 926.8M818.3 915.9L814.5 929.2M818.3 915.9L800.5 923.7M818.3 915.9L797 913.7M818.3 915.9L805.9 904.9M818.3 915.9L822.1 902.5M818.3 915.9L836 908M818.3 915.9L839.5 918M761 996.9L752.7 1001.7L741.8 1003.3L731.1 1001.2L723.6 996.1L721.2 989.3L724.7 982.6L732.9 977.8L743.9 976.3L754.5 978.3L762 983.4L764.4 990.2L761 996.9M742.8 989.8L755.2 1000.7M742.8 989.8L739 1003.1M742.8 989.8L725.1 997.6M742.8 989.8L721.6 987.6M742.8 989.8L730.5 978.8M742.8 989.8L746.6 976.4M742.8 989.8L760.5 981.9M742.8 989.8L764.1 991.9M1257.6 674.4L1249.3 679.1L1238.4 680.7L1227.8 678.7L1220.2 673.6L1217.9 666.8L1221.3 660.1L1229.6 655.3L1240.5 653.7L1251.1 655.8L1258.7 660.9L1261 667.7L1257.6 674.4M1239.4 667.2L1251.8 678.2M1239.4 667.2L1235.7 680.5M1239.4 667.2L1221.7 675.1M1239.4 667.2L1218.2 665M1239.4 667.2L1227.1 656.3M1239.4 667.2L1243.2 653.9M1239.4 667.2L1257.2 659.3M1239.4 667.2L1260.7 669.4M1182.2 748.3L1173.9 753L1163 754.6L1152.3 752.6L1144.8 747.5L1142.4 740.7L1145.9 734L1154.1 729.2L1165.1 727.6L1175.7 729.7L1183.2 734.8L1185.6 741.6L1182.2 748.3M1164 741.1L1176.4 752.1M1164 741.1L1160.2 754.5M1164 741.1L1146.3 749M1164 741.1L1142.8 739M1164 741.1L1151.7 730.2M1164 741.1L1167.8 727.8M1164 741.1L1181.7 733.3M1164 741.1L1185.3 743.3M1106.7 822.2L1098.5 827L1087.5 828.5L1076.9 826.5L1069.4 821.4L1067 814.6L1070.4 807.9L1078.7 803.1L1089.6 801.6L1100.3 803.6L1107.8 808.7L1110.1 815.5L1106.7 822.2M1088.6 815L1100.9 826M1088.6 815L1084.8 828.4M1088.6 815L1070.9 822.9M1088.6 815L1067.3 812.9M1088.6 815L1076.2 804.1M1088.6 815L1092.4 801.7M1088.6 815L1106.3 807.2M1088.6 815L1109.8 817.2M1031.3 896.1L1023 900.9L1012.1 902.4L1001.5 900.4L993.9 895.3L991.6 888.5L995 881.8L1003.3 877L1014.2 875.5L1024.8 877.5L1032.3 882.6L1034.7 889.4L1031.3 896.1M1013.1 889L1025.5 899.9M1013.1 889L1009.3 902.3M1013.1 889L995.4 896.8M1013.1 889L991.9 886.8M1013.1 889L1000.8 878M1013.1 889L1016.9 875.6M1013.1 889L1030.9 881.1M1013.1 889L1034.4 891.1M955.9 970L947.6 974.8L936.7 976.4L926 974.3L918.5 969.2L916.1 962.4L919.6 955.7L927.8 950.9L938.8 949.4L949.4 951.4L956.9 956.5L959.3 963.3L955.9 970M937.7 962.9L950.1 973.8M937.7 962.9L933.9 976.2M937.7 962.9L920 970.7M937.7 962.9L916.5 960.7M937.7 962.9L925.4 951.9M937.7 962.9L941.5 949.5M937.7 962.9L955.4 955M937.7 962.9L959 965M880.4 1043.9L872.2 1048.7L861.2 1050.3L850.6 1048.2L843.1 1043.1L840.7 1036.3L844.1 1029.6L852.4 1024.9L863.3 1023.3L874 1025.3L881.5 1030.4L883.8 1037.2L880.4 1043.9M862.3 1036.8L874.6 1047.7M862.3 1036.8L858.5 1050.1M862.3 1036.8L844.6 1044.7M862.3 1036.8L841 1034.6M862.3 1036.8L849.9 1025.8M862.3 1036.8L866.1 1023.5M862.3 1036.8L880 1028.9M862.3 1036.8L883.5 1039M1377 721.4L1368.8 726.1L1357.8 727.7L1347.2 725.7L1339.7 720.6L1337.3 713.8L1340.7 707.1L1349 702.3L1359.9 700.7L1370.6 702.8L1378.1 707.9L1380.4 714.7L1377 721.4M1358.9 714.2L1371.2 725.2M1358.9 714.2L1355.1 727.5M1358.9 714.2L1341.2 722.1M1358.9 714.2L1337.6 712M1358.9 714.2L1346.5 703.3M1358.9 714.2L1362.7 700.9M1358.9 714.2L1376.6 706.3M1358.9 714.2L1380.1 716.4M1301.6 795.3L1293.3 800L1282.4 801.6L1271.8 799.6L1264.2 794.5L1261.9 787.7L1265.3 781L1273.6 776.2L1284.5 774.6L1295.1 776.7L1302.6 781.8L1305 788.6L1301.6 795.3M1283.4 788.1L1295.8 799.1M1283.4 788.1L1279.7 801.5M1283.4 788.1L1265.7 796M1283.4 788.1L1262.2 785.9M1283.4 788.1L1271.1 777.2M1283.4 788.1L1287.2 774.8M1283.4 788.1L1301.2 780.2M1283.4 788.1L1304.7 790.3M1226.2 869.2L1217.9 874L1207 875.5L1196.3 873.5L1188.8 868.4L1186.5 861.6L1189.9 854.9L1198.1 850.1L1209.1 848.5L1219.7 850.6L1227.2 855.7L1229.6 862.5L1226.2 869.2M1208 862L1220.4 873M1208 862L1204.2 875.4M1208 862L1190.3 869.9M1208 862L1186.8 859.9M1208 862L1195.7 851.1M1208 862L1211.8 848.7M1208 862L1225.7 854.2M1208 862L1229.3 864.2M1150.7 943.1L1142.5 947.9L1131.5 949.5L1120.9 947.4L1113.4 942.3L1111 935.5L1114.4 928.8L1122.7 924L1133.6 922.5L1144.3 924.5L1151.8 929.6L1154.2 936.4L1150.7 943.1M1132.6 936L1144.9 946.9M1132.6 936L1128.8 949.3M1132.6 936L1114.9 943.8M1132.6 936L1111.3 933.8M1132.6 936L1120.2 925M1132.6 936L1136.4 922.6M1132.6 936L1150.3 928.1M1132.6 936L1153.9 938.1M1075.3 1017L1067 1021.8L1056.1 1023.4L1045.5 1021.3L1038 1016.2L1035.6 1009.4L1039 1002.7L1047.3 998L1058.2 996.4L1068.9 998.4L1076.4 1003.5L1078.7 1010.3L1075.3 1017M1057.2 1009.9L1069.5 1020.8M1057.2 1009.9L1053.4 1023.2M1057.2 1009.9L1039.4 1017.8M1057.2 1009.9L1035.9 1007.7M1057.2 1009.9L1044.8 998.9M1057.2 1009.9L1061 996.5M1057.2 1009.9L1074.9 1002M1057.2 1009.9L1078.4 1012.1M999.9 1090.9L991.6 1095.7L980.7 1097.3L970 1095.2L962.5 1090.1L960.2 1083.3L963.6 1076.6L971.9 1071.9L982.8 1070.3L993.4 1072.3L1000.9 1077.4L1003.3 1084.2L999.9 1090.9M981.7 1083.8L994.1 1094.8M981.7 1083.8L977.9 1097.1M981.7 1083.8L964 1091.7M981.7 1083.8L960.5 1081.6M981.7 1083.8L969.4 1072.8M981.7 1083.8L985.5 1070.5M981.7 1083.8L999.5 1075.9M981.7 1083.8L1003 1086M1496.5 768.3L1488.2 773.1L1477.3 774.7L1466.6 772.7L1459.1 767.6L1456.7 760.7L1460.1 754.1L1468.4 749.3L1479.3 747.7L1490 749.7L1497.5 754.8L1499.9 761.7L1496.5 768.3M1478.3 761.2L1490.6 772.2M1478.3 761.2L1474.5 774.5M1478.3 761.2L1460.6 769.1M1478.3 761.2L1457 759M1478.3 761.2L1466 750.2M1478.3 761.2L1482.1 747.9M1478.3 761.2L1496 753.3M1478.3 761.2L1499.6 763.4M1421 842.3L1412.8 847L1401.8 848.6L1391.2 846.6L1383.7 841.5L1381.3 834.7L1384.7 828L1393 823.2L1403.9 821.6L1414.6 823.7L1422.1 828.8L1424.4 835.6L1421 842.3M1402.9 835.1L1415.2 846.1M1402.9 835.1L1399.1 848.4M1402.9 835.1L1385.2 843M1402.9 835.1L1381.6 832.9M1402.9 835.1L1390.5 824.2M1402.9 835.1L1406.7 821.8M1402.9 835.1L1420.6 827.2M1402.9 835.1L1424.1 837.3M1345.6 916.2L1337.3 921L1326.4 922.5L1315.8 920.5L1308.3 915.4L1305.9 908.6L1309.3 901.9L1317.6 897.1L1328.5 895.5L1339.2 897.6L1346.7 902.7L1349 909.5L1345.6 916.2M1327.5 909L1339.8 920M1327.5 909L1323.7 922.4M1327.5 909L1309.7 916.9M1327.5 909L1306.2 906.9M1327.5 909L1315.1 898.1M1327.5 909L1331.3 895.7M1327.5 909L1345.2 901.2M1327.5 909L1348.7 911.2M1270.2 990.1L1261.9 994.9L1251 996.5L1240.3 994.4L1232.8 989.3L1230.5 982.5L1233.9 975.8L1242.2 971L1253.1 969.5L1263.7 971.5L1271.2 976.6L1273.6 983.4L1270.2 990.1M1252 983L1264.4 993.9M1252 983L1248.2 996.3M1252 983L1234.3 990.8M1252 983L1230.8 980.8M1252 983L1239.7 972M1252 983L1255.8 969.6M1252 983L1269.8 975.1M1252 983L1273.3 985.1M1194.8 1064L1186.5 1068.8L1175.6 1070.4L1164.9 1068.3L1157.4 1063.2L1155.1 1056.4L1158.5 1049.7L1166.7 1045L1177.7 1043.4L1188.3 1045.4L1195.8 1050.5L1198.2 1057.3L1194.8 1064M1176.6 1056.9L1189 1067.8M1176.6 1056.9L1172.8 1070.2M1176.6 1056.9L1158.9 1064.8M1176.6 1056.9L1155.4 1054.7M1176.6 1056.9L1164.3 1045.9M1176.6 1056.9L1180.4 1043.6M1176.6 1056.9L1194.3 1049M1176.6 1056.9L1197.9 1059.1M1119.4 1137.9L1111.1 1142.7L1100.2 1144.3L1089.5 1142.3L1082 1137.1L1079.6 1130.3L1083 1123.7L1091.3 1118.9L1102.2 1117.3L1112.9 1119.3L1120.4 1124.5L1122.8 1131.3L1119.4 1137.9M1101.2 1130.8L1113.6 1141.8M1101.2 1130.8L1097.4 1144.1M1101.2 1130.8L1083.5 1138.7M1101.2 1130.8L1079.9 1128.6M1101.2 1130.8L1088.8 1119.8M1101.2 1130.8L1105 1117.5M1101.2 1130.8L1118.9 1122.9M1101.2 1130.8L1122.5 1133" stroke="#00003c" stroke-width="1" fill="none"/>
</g>
<path d="M522.9 385.3L145.5 754.7M534.8 390L157.4 759.4M546.8 394.7L169.4 764.1M558.7 399.4L181.3 768.8M570.7 404.1L193.3 773.5M582.6 408.8L205.2 778.2M594.6 413.5L217.2 782.9M606.5 418.2L229.1 787.6M618.4 422.9L241.1 792.3M630.4 427.6L253 797M642.3 432.3L265 801.7M654.3 437L276.9 806.4M666.2 441.7L288.9 811.1M678.2 446.4L300.8 815.8M690.1 451.1L312.7 820.5M702 455.8L324.7 825.2M714 460.5L336.6 829.9M725.9 465.2L348.6 834.6M737.9 469.9L360.5 839.3M749.8 474.6L372.5 844M761.8 479.3L384.4 848.7M773.7 484L396.4 853.4M785.6 488.7L408.3 858.1M797.6 493.4L420.3 862.8M809.5 498.1L432.2 867.5M821.5 502.8L444.2 872.2M833.4 507.5L456.1 876.9M845.3 512.2L468 881.6M857.3 516.9L480 886.3M869.2 521.6L491.9 891M881.2 526.3L503.9 895.7M893.1 531L515.8 900.4M905.1 535.7L527.8 905.1M917 540.4L539.7 909.8M928.9 545.1L551.7 914.5M940.9 549.8L563.6 919.2M952.8 554.5L575.6 923.9M964.8 559.2L587.5 928.6M976.7 563.9L599.5 933.3M988.7 568.6L611.4 938M1000.6 573.2L623.4 942.8M1012.5 577.9L635.3 947.5M1024.5 582.6L647.2 952.2M1036.4 587.3L659.2 956.9M1048.4 592L671.1 961.6M1060.3 596.7L683.1 966.3M1072.3 601.4L695 971M1084.2 606.1L707 975.7M1096.1 610.8L718.9 980.4M1108.1 615.5L730.9 985.1M1120 620.2L742.8 989.8M1132 624.9L754.8 994.5M1143.9 629.6L766.7 999.2M1155.9 634.3L778.7 1003.9M1167.8 639L790.6 1008.6M1179.7 643.7L802.5 1013.3M1191.7 648.4L814.5 1018M1203.6 653.1L826.4 1022.7M1215.6 657.8L838.4 1027.4M1227.5 662.5L850.3 1032.1M1239.4 667.2L862.3 1036.8M1251.4 671.9L874.2 1041.5M1263.3 676.6L886.2 1046.2M1275.3 681.3L898.1 1050.9M1287.2 686L910.1 1055.6M1299.2 690.7L922 1060.3M1311.1 695.4L934 1065M1323 700.1L945.9 1069.7M1335 704.8L957.8 1074.4M1346.9 709.5L969.8 1079.1M1358.9 714.2L981.7 1083.8M1370.8 718.9L993.7 1088.5M1382.8 723.6L1005.6 1093.2M1394.7 728.3L1017.6 1097.9M1406.6 733L1029.5 1102.6M1418.6 737.7L1041.5 1107.3M1430.5 742.4L1053.4 1112M1442.5 747.1L1065.4 1116.7M1454.4 751.8L1077.3 1121.4M1466.4 756.5L1089.3 1126.1M1478.3 761.2L1101.2 1130.8M522.9 385.3L1478.3 761.2M515.2 392.8L1470.6 768.7M507.5 400.4L1462.9 776.3M499.8 407.9L1455.2 783.8M492.1 415.5L1447.5 791.4M484.4 423L1439.8 798.9M476.7 430.5L1432.1 806.5M469 438.1L1424.4 814M461.3 445.6L1416.7 821.5M453.6 453.1L1409 829.1M445.9 460.7L1401.3 836.6M438.2 468.2L1393.6 844.2M430.5 475.8L1385.9 851.7M422.8 483.3L1378.3 859.3M415.1 490.8L1370.6 866.8M407.4 498.4L1362.9 874.3M399.7 505.9L1355.2 881.9M392 513.5L1347.5 889.4M384.3 521L1339.8 897M376.6 528.5L1332.1 904.5M368.9 536.1L1324.4 912.1M361.2 543.6L1316.7 919.6M353.5 551.2L1309 927.1M345.8 558.7L1301.3 934.7M338.1 566.2L1293.6 942.2M330.3 573.8L1285.9 949.8M322.6 581.3L1278.2 957.3M314.9 588.8L1270.5 964.9M307.2 596.4L1262.8 972.4M299.5 603.9L1255.1 979.9M291.8 611.5L1247.4 987.5M284.1 619L1239.7 995M276.4 626.5L1232 1002.6M268.7 634.1L1224.3 1010.1M261 641.6L1216.6 1017.7M253.3 649.2L1208.9 1025.2M245.6 656.7L1201.2 1032.7M237.9 664.2L1193.6 1040.3M230.2 671.8L1185.9 1047.8M222.5 679.3L1178.2 1055.4M214.8 686.9L1170.5 1062.9M207.1 694.4L1162.8 1070.5M199.4 701.9L1155.1 1078M191.7 709.5L1147.4 1085.5M184 717L1139.7 1093.1M176.3 724.5L1132 1100.6M168.6 732.1L1124.3 1108.2M160.9 739.6L1116.6 1115.7M153.2 747.2L1108.9 1123.3M145.5 754.7L1101.2 1130.8" stroke="#00003c" stroke-width="1.05" fill="none"/>
<path d="M642.3 432.3L265 801.7M761.8 479.3L384.4 848.7M881.2 526.3L503.9 895.7M1000.6 573.2L623.4 942.8M1120 620.2L742.8 989.8M1239.4 667.2L862.3 1036.8M1358.9 714.2L981.7 1083.8M447.4 459.2L1402.9 835.1M371.9 533.1L1327.5 909M296.5 606.9L1252 983M221 680.8L1176.6 1056.9" stroke="#ecd2cc" stroke-width="1" fill="none" opacity="0.9"/>
</g>
<rect x="5" y="53.8" width="25" height="113.3" fill="#0c1ca6"/>
<rect x="5" y="166.8" width="25" height="113.3" fill="#0000ff"/>
<rect x="5" y="279.7" width="25" height="113.3" fill="#0055ff"/>
<rect x="5" y="392.7" width="25" height="113.3" fill="#00aaff"/>
<rect x="5" y="505.7" width="25" height="113.3" fill="#00d0ff"/>
<rect x="5" y="618.6" width="25" height="113.3" fill="#17dcc0"/>
<rect x="5" y="731.6" width="25" height="113.3" fill="#00fa8a"/>
<rect x="5" y="844.6" width="25" height="113.3" fill="#2af53a"/>
<rect x="5" y="957.6" width="25" height="113.3" fill="#66fa00"/>
<rect x="5" y="1070.5" width="25" height="113.3" fill="#aafa0a"/>
<rect x="5" y="1183.5" width="25" height="113.3" fill="#ffff00"/>
<rect x="5" y="1296.5" width="25" height="113.3" fill="#ffa500"/>
<rect x="5" y="1409.4" width="25" height="113.3" fill="#ff5500"/>
<rect x="5" y="1522.4" width="25" height="113.3" fill="#ff0000"/>
<rect x="5" y="1635.4" width="25" height="113.3" fill="#dc0a64"/>
<g font-size="12.4" fill="#000">
<text x="31.7" y="58.1">-3.5356</text>
<text x="31.7" y="171.1">-2.7533</text>
<text x="31.7" y="284">-1.9709</text>
<text x="31.7" y="397">-1.1885</text>
<text x="31.7" y="510">-0.4061</text>
<text x="31.7" y="622.9">0.3762</text>
<text x="31.7" y="735.9">1.1586</text>
<text x="31.7" y="848.9">1.941</text>
<text x="31.7" y="961.9">2.7233</text>
<text x="31.7" y="1074.8">3.5057</text>
<text x="31.7" y="1187.8">4.2881</text>
<text x="31.7" y="1300.8">5.0704</text>
<text x="31.7" y="1413.7">5.8528</text>
<text x="31.7" y="1526.7">6.6352</text>
<text x="31.7" y="1639.7">7.4175</text>
<text x="31.7" y="1752.6">8.1999</text>
</g>
<text x="5.8" y="19" font-size="12.6" fill="#3a3a3a" textLength="263" lengthAdjust="spacingAndGlyphs">Döşeme sonuçları - F12 : 0.9G'+Ex'-0.3Ey'-0.3Ez</text>
<text x="5.8" y="38.7" font-size="13.4" fill="#000" textLength="33" lengthAdjust="spacingAndGlyphs">[tf/m]</text>
<rect x="1606" y="4" width="17.9" height="15.9" fill="#2e2e2e"/>
<rect x="1606.8" y="4.8" width="15.5" height="13.7" fill="#fff"/>
<rect x="1608" y="6" width="14.3" height="12.5" fill="#d3d3d3"/>
<rect x="1623.9" y="4" width="17.9" height="15.9" fill="#2e2e2e"/>
<rect x="1624.7" y="4.8" width="15.5" height="13.7" fill="#fff"/>
<rect x="1625.9" y="6" width="14.3" height="12.5" fill="#d3d3d3"/>
<rect x="1641.8" y="4" width="17.9" height="15.9" fill="#2e2e2e"/>
<rect x="1642.6" y="4.8" width="15.5" height="13.7" fill="#fff"/>
<rect x="1643.8" y="6" width="14.3" height="12.5" fill="#d3d3d3"/>
<path d="M1608.6 6.6h13l-6 6v3.4l-2 1.6v-5z" fill="none" stroke="#111" stroke-width="1.2"/>
<path d="M1631.1 9.3l2.2-2.6v10" fill="none" stroke="#111" stroke-width="1.3"/>
<path d="M1645.4 16.6l5-9.4 5 9.4" fill="none" stroke="#111" stroke-width="1.2"/>
<clipPath id="cR"><rect x="1668" y="7" width="1645" height="1754"/></clipPath>
<g clip-path="url(#cR)">
<path d="M1377.9 -2467.7L-3258.4 2341.4M1447 -2445.3L-3189.3 2363.8M1516 -2422.9L-3120.3 2386.2M1585 -2400.5L-3051.3 2408.6M1654.1 -2378.1L-2982.2 2431M1723.1 -2355.7L-2913.2 2453.4M1792.2 -2333.3L-2844.2 2475.8M1861.2 -2310.9L-2775.1 2498.2M1930.2 -2288.5L-2706.1 2520.7M1999.3 -2266.1L-2637.1 2543.1M2068.3 -2243.7L-2568 2565.5M2137.3 -2221.3L-2499 2587.9M2206.4 -2198.9L-2429.9 2610.3M2275.4 -2176.4L-2360.9 2632.7M2344.4 -2154L-2291.9 2655.1M2413.5 -2131.6L-2222.8 2677.5M2482.5 -2109.2L-2153.8 2699.9M2551.6 -2086.8L-2084.8 2722.3M2620.6 -2064.4L-2015.7 2744.7M2689.6 -2042L-1946.7 2767.1M2758.7 -2019.6L-1877.7 2789.5M2827.7 -1997.2L-1808.6 2811.9M2896.7 -1974.8L-1739.6 2834.3M2965.8 -1952.4L-1670.6 2856.7M3034.8 -1930L-1601.5 2879.1M3103.8 -1907.6L-1532.5 2901.5M3172.9 -1885.2L-1463.4 2923.9M3241.9 -1862.8L-1394.4 2946.3M3310.9 -1840.4L-1325.4 2968.7M3380 -1818L-1256.3 2991.1M3449 -1795.6L-1187.3 3013.5M3518.1 -1773.2L-1118.3 3035.9M3587.1 -1750.8L-1049.2 3058.3M3656.1 -1728.4L-980.2 3080.8M3725.2 -1706L-911.2 3103.2M3794.2 -1683.6L-842.1 3125.6M3863.2 -1661.2L-773.1 3148M3932.3 -1638.8L-704 3170.4M4001.3 -1616.3L-635 3192.8M4070.3 -1593.9L-566 3215.2M4139.4 -1571.5L-496.9 3237.6M4208.4 -1549.1L-427.9 3260M4277.5 -1526.7L-358.9 3282.4M4346.5 -1504.3L-289.8 3304.8M4415.5 -1481.9L-220.8 3327.2M4553.6 -1437.1L-82.7 3372M4622.6 -1414.7L-13.7 3394.4M4691.7 -1392.3L55.3 3416.8M4760.7 -1369.9L124.4 3439.2M4829.7 -1347.5L193.4 3461.6M4898.8 -1325.1L262.5 3484M4967.8 -1302.7L331.5 3506.4M5036.8 -1280.3L400.5 3528.8M5105.9 -1257.9L469.6 3551.2M5174.9 -1235.5L538.6 3573.6M5244 -1213.1L607.6 3596M5313 -1190.7L676.7 3618.4M5382 -1168.3L745.7 3640.9M5451.1 -1145.9L814.7 3663.3M5520.1 -1123.5L883.8 3685.7M5589.1 -1101.1L952.8 3708.1M5658.2 -1078.7L1021.9 3730.5M5727.2 -1056.2L1090.9 3752.9M5796.2 -1033.8L1159.9 3775.3M5865.3 -1011.4L1229 3797.7M5934.3 -989L1298 3820.1M6003.4 -966.6L1367 3842.5M6072.4 -944.2L1436.1 3864.9M6141.4 -921.8L1505.1 3887.3M6210.5 -899.4L1574.1 3909.7M6279.5 -877L1643.2 3932.1M6348.5 -854.6L1712.2 3954.5M6417.6 -832.2L1781.2 3976.9M6486.6 -809.8L1850.3 3999.3M6555.6 -787.4L1919.3 4021.7M6624.7 -765L1988.4 4044.1M6693.7 -742.6L2057.4 4066.5M6762.7 -720.2L2126.4 4088.9M6831.8 -697.8L2195.5 4111.3M6900.8 -675.4L2264.5 4133.7M6969.9 -653L2333.5 4156.1M7038.9 -630.6L2402.6 4178.5M7107.9 -608.2L2471.6 4201M7177 -585.8L2540.6 4223.4M7246 -563.4L2609.7 4245.8M7315 -541L2678.7 4268.2M7384.1 -518.6L2747.8 4290.6M7453.1 -496.1L2816.8 4313M7522.1 -473.7L2885.8 4335.4M7591.2 -451.3L2954.9 4357.8M1377.9 -2467.7L7591.2 -451.3M1339.3 -2427.6L7552.5 -411.3M1300.7 -2387.5L7513.9 -371.2M1262 -2347.5L7475.3 -331.1M1223.4 -2307.4L7436.6 -291M1184.8 -2267.3L7398 -251M1146.1 -2227.2L7359.4 -210.9M1107.5 -2187.2L7320.7 -170.8M1068.9 -2147.1L7282.1 -130.7M1030.2 -2107L7243.5 -90.7M991.6 -2066.9L7204.8 -50.6M952.9 -2026.9L7166.2 -10.5M914.3 -1986.8L7127.5 29.6M875.7 -1946.7L7088.9 69.6M837 -1906.6L7050.3 109.7M798.4 -1866.6L7011.6 149.8M759.8 -1826.5L6973 189.9M721.1 -1786.4L6934.4 230M682.5 -1746.3L6895.7 270M643.9 -1706.3L6857.1 310.1M605.2 -1666.2L6818.5 350.2M566.6 -1626.1L6779.8 390.3M527.9 -1586L6741.2 430.3M489.3 -1546L6702.6 470.4M450.7 -1505.9L6663.9 510.5M412 -1465.8L6625.3 550.6M373.4 -1425.7L6586.6 590.6M334.8 -1385.6L6548 630.7M296.1 -1345.6L6509.4 670.8M257.5 -1305.5L6470.7 710.9M218.9 -1265.4L6432.1 750.9M180.2 -1225.3L6393.5 791M141.6 -1185.3L6354.8 831.1M103 -1145.2L6316.2 871.2M64.3 -1105.1L6277.6 911.2M25.7 -1065L6238.9 951.3M-13 -1025L6200.3 991.4M-51.6 -984.9L6161.6 1031.5M-90.2 -944.8L6123 1071.5M-128.9 -904.7L6084.4 1111.6M-167.5 -864.7L6045.7 1151.7M-206.1 -824.6L6007.1 1191.8M-244.8 -784.5L5968.5 1231.9M-283.4 -744.4L5929.8 1271.9M-322 -704.4L5891.2 1312M-360.7 -664.3L5852.6 1352.1M-399.3 -624.2L5813.9 1392.2M-438 -584.1L5775.3 1432.2M-476.6 -544.1L5736.7 1472.3M-515.2 -504L5698 1512.4M-553.9 -463.9L5659.4 1552.5M-592.5 -423.8L5620.7 1592.5M-631.1 -383.7L5582.1 1632.6M-669.8 -343.7L5543.5 1672.7M-708.4 -303.6L5504.8 1712.8M-747 -263.5L5466.2 1752.8M-785.7 -223.4L5427.6 1792.9M-824.3 -183.4L5388.9 1833M-862.9 -143.3L5350.3 1873.1M-901.6 -103.2L5311.7 1913.1M-978.9 -23.1L5234.4 1993.3M-1017.5 17L5195.7 2033.4M-1056.1 57.1L5157.1 2073.4M-1094.8 97.2L5118.5 2113.5M-1133.4 137.2L5079.8 2153.6M-1172 177.3L5041.2 2193.7M-1210.7 217.4L5002.6 2233.8M-1249.3 257.5L4963.9 2273.8M-1287.9 297.5L4925.3 2313.9M-1326.6 337.6L4886.7 2354M-1365.2 377.7L4848 2394.1M-1403.9 417.8L4809.4 2434.1M-1442.5 457.8L4770.8 2474.2M-1481.1 497.9L4732.1 2514.3M-1519.8 538L4693.5 2554.4M-1558.4 578.1L4654.8 2594.4M-1597 618.2L4616.2 2634.5M-1635.7 658.2L4577.6 2674.6M-1674.3 698.3L4538.9 2714.7M-1712.9 738.4L4500.3 2754.7M-1751.6 778.5L4461.7 2794.8M-1790.2 818.5L4423 2834.9M-1828.8 858.6L4384.4 2875M-1867.5 898.7L4345.8 2915M-1906.1 938.8L4307.1 2955.1M-1944.8 978.8L4268.5 2995.2M-1983.4 1018.9L4229.8 3035.3M-2022 1059L4191.2 3075.3M-2060.7 1099.1L4152.6 3115.4M-2099.3 1139.1L4113.9 3155.5M-2137.9 1179.2L4075.3 3195.6M-2176.6 1219.3L4036.7 3235.7M-2215.2 1259.4L3998 3275.7M-2253.8 1299.4L3959.4 3315.8M-2292.5 1339.5L3920.8 3355.9M-2331.1 1379.6L3882.1 3396M-2369.8 1419.7L3843.5 3436M-2408.4 1459.7L3804.9 3476.1M-2447 1499.8L3766.2 3516.2M-2485.7 1539.9L3727.6 3556.3M-2524.3 1580L3688.9 3596.3M-2562.9 1620.1L3650.3 3636.4M-2601.6 1660.1L3611.7 3676.5M-2640.2 1700.2L3573 3716.6M-2678.8 1740.3L3534.4 3756.6M-2717.5 1780.4L3495.8 3796.7M-2756.1 1820.4L3457.1 3836.8M-2794.7 1860.5L3418.5 3876.9M-2833.4 1900.6L3379.9 3916.9M-2872 1940.7L3341.2 3957M-2910.7 1980.7L3302.6 3997.1M-2949.3 2020.8L3263.9 4037.2M-2987.9 2060.9L3225.3 4077.2M-3026.6 2101L3186.7 4117.3M-3065.2 2141L3148 4157.4M-3103.8 2181.1L3109.4 4197.5M-3142.5 2221.2L3070.8 4237.6M-3181.1 2261.3L3032.1 4277.6M-3219.7 2301.3L2993.5 4317.7M-3258.4 2341.4L2954.9 4357.8" stroke="#d9d9ee" stroke-width="1" fill="none"/>
<path d="M4484.6 -1459.5L-151.8 3349.6M-940.2 -63.1L5273 1953.2" stroke="#6e6e6e" stroke-width="1" fill="none"/>
<polygon points="1820.1,837.9 2915.4,1191.5 2915.4,1288.3 1820.1,934.7" fill="#e0fbe0" fill-opacity="0.93"/>
<polygon points="2915.4,1191.5 3297.1,797.2 3297.1,894 2915.4,1288.3" fill="#e0fbe0" fill-opacity="0.93"/>
<path d="M1820.1 837.9v96.8M1833.8 842.3v96.8M1847.5 846.7v96.8M1861.2 851.2v96.8M1874.9 855.6v96.8M1888.6 860v96.8M1902.2 864.4v96.8M1915.9 868.8v96.8M1929.6 873.3v96.8M1943.3 877.7v96.8M1957 882.1v96.8M1970.7 886.5v96.8M1984.4 890.9v96.8M1998.1 895.4v96.8M2011.8 899.8v96.8M2025.5 904.2v96.8M2039.2 908.6v96.8M2052.9 913v96.8M2066.5 917.5v96.8M2080.2 921.9v96.8M2093.9 926.3v96.8M2107.6 930.7v96.8M2121.3 935.1v96.8M2135 939.6v96.8M2148.7 944v96.8M2162.4 948.4v96.8M2176.1 952.8v96.8M2189.8 957.2v96.8M2203.5 961.7v96.8M2217.1 966.1v96.8M2230.8 970.5v96.8M2244.5 974.9v96.8M2258.2 979.3v96.8M2271.9 983.8v96.8M2285.6 988.2v96.8M2299.3 992.6v96.8M2313 997v96.8M2326.7 1001.4v96.8M2340.4 1005.9v96.8M2354.1 1010.3v96.8M2367.8 1014.7v96.8M2381.4 1019.1v96.8M2395.1 1023.5v96.8M2408.8 1028v96.8M2422.5 1032.4v96.8M2436.2 1036.8v96.8M2449.9 1041.2v96.8M2463.6 1045.6v96.8M2477.3 1050.1v96.8M2491 1054.5v96.8M2504.7 1058.9v96.8M2518.4 1063.3v96.8M2532 1067.7v96.8M2545.7 1072.2v96.8M2559.4 1076.6v96.8M2573.1 1081v96.8M2586.8 1085.4v96.8M2600.5 1089.8v96.8M2614.2 1094.3v96.8M2627.9 1098.7v96.8M2641.6 1103.1v96.8M2655.3 1107.5v96.8M2669 1111.9v96.8M2682.6 1116.4v96.8M2696.3 1120.8v96.8M2710 1125.2v96.8M2723.7 1129.6v96.8M2737.4 1134v96.8M2751.1 1138.5v96.8M2764.8 1142.9v96.8M2778.5 1147.3v96.8M2792.2 1151.7v96.8M2805.9 1156.1v96.8M2819.6 1160.6v96.8M2833.3 1165v96.8M2846.9 1169.4v96.8M2860.6 1173.8v96.8M2874.3 1178.2v96.8M2888 1182.7v96.8M2901.7 1187.1v96.8M2915.4 1191.5v96.8M2915.4 1191.5v96.8M2923.2 1183.5v96.8M2931 1175.4v96.8M2938.8 1167.4v96.8M2946.6 1159.3v96.8M2954.3 1151.3v96.8M2962.1 1143.2v96.8M2969.9 1135.2v96.8M2977.7 1127.1v96.8M2985.5 1119.1v96.8M2993.3 1111v96.8M3001.1 1103v96.8M3008.9 1094.9v96.8M3016.7 1086.9v96.8M3024.5 1078.8v96.8M3032.2 1070.8v96.8M3040 1062.7v96.8M3047.8 1054.7v96.8M3055.6 1046.7v96.8M3063.4 1038.6v96.8M3071.2 1030.6v96.8M3079 1022.5v96.8M3086.8 1014.5v96.8M3094.6 1006.4v96.8M3102.4 998.4v96.8M3110.1 990.3v96.8M3117.9 982.3v96.8M3125.7 974.2v96.8M3133.5 966.2v96.8M3141.3 958.1v96.8M3149.1 950.1v96.8M3156.9 942v96.8M3164.7 934v96.8M3172.5 926v96.8M3180.3 917.9v96.8M3188 909.9v96.8M3195.8 901.8v96.8M3203.6 893.8v96.8M3211.4 885.7v96.8M3219.2 877.7v96.8M3227 869.6v96.8M3234.8 861.6v96.8M3242.6 853.5v96.8M3250.4 845.5v96.8M3258.2 837.4v96.8M3265.9 829.4v96.8M3273.7 821.3v96.8M3281.5 813.3v96.8M3289.3 805.2v96.8M3297.1 797.2v96.8M1820.1 850L2915.4 1203.6L3297.1 809.3M1820.1 862.1L2915.4 1215.7L3297.1 821.4M1820.1 874.2L2915.4 1227.8L3297.1 833.5M1820.1 886.3L2915.4 1239.9L3297.1 845.6M1820.1 898.4L2915.4 1252L3297.1 857.7M1820.1 910.5L2915.4 1264.1L3297.1 869.8M1820.1 922.6L2915.4 1276.2L3297.1 881.9M1820.1 934.7L2915.4 1288.3L3297.1 894" stroke="#3c3c3c" stroke-width="1" fill="none"/>
<clipPath id="tRb"><polygon points="1820.1,837.9 1820.1,934.7 1891.1,860.8"/></clipPath>
<g clip-path="url(#tRb)">
<polygon points="1820.1,837.9 1820.1,934.7 1891.1,860.8" fill="#9fc8a6" fill-opacity="0.28"/>
<path d="M1827.9 829.8v96.8M1835.7 821.7v96.8M1843.4 813.6v96.8M1851.2 805.5v96.8M1859 797.5v96.8M1866.8 789.4v96.8M1874.6 781.3v96.8M1882.3 773.2v96.8M1820.1 850L1896.3 770.7M1820.1 862.1L1896.3 782.8M1820.1 874.2L1896.3 794.9M1820.1 886.3L1896.3 807M1820.1 898.4L1896.3 819.1M1820.1 910.5L1896.3 831.2M1820.1 922.6L1896.3 843.3" stroke="#4a5a4c" stroke-width="0.9" fill="none" opacity="0.75"/>
</g>
<clipPath id="tRd"><polygon points="3297.1,797.2 3297.1,894 3225.8,870.9"/></clipPath>
<g clip-path="url(#tRd)">
<polygon points="3297.1,797.2 3297.1,894 3225.8,870.9" fill="#9fc8a6" fill-opacity="0.28"/>
<path d="M3283.4 792.8v96.8M3269.7 788.3v96.8M3256 783.9v96.8M3242.3 779.4v96.8M3228.6 775v96.8M3214.9 770.5v96.8M3201.2 766.1v96.8M3187.5 761.6v96.8M3173.8 757.2v96.8M3160.1 752.8v96.8M3146.4 748.3v96.8M3132.7 743.9v96.8M3119 739.4v96.8M3105.3 735v96.8M3091.6 730.5v96.8M3297.1 809.3L3077.9 738.2M3297.1 821.4L3077.9 750.3M3297.1 833.5L3077.9 762.4M3297.1 845.6L3077.9 774.5M3297.1 857.7L3077.9 786.6M3297.1 869.8L3077.9 798.7M3297.1 881.9L3077.9 810.8" stroke="#4a5a4c" stroke-width="0.9" fill="none" opacity="0.75"/>
</g>
<g shape-rendering="crispEdges">
<polygon points="2201.3,441.6 3297.1,797.2 2915.4,1191.5 1820.1,837.9" fill="#0c1ca6"/>
<path d="M2201 442l514 166l-9 4l-12 10l-5 6l-7 12l-5 12l-3 8l-2 14l0 13l1 11l3 9l8 5l10 1l14-1l19-8l8-5l10-11l9-11l18-31l6-17l519 168l-382 395l-499-162l14-9l6-5l9-11l7-16l4-16l-1-24l-2-23l-2-10l-6-6l-9-3l-12-1l-13 3l-9 5l-8 4l-11 11l-21 35l-8 11l-17 16l-7 5l-8 4l-502-162l381-396z" fill="#0000ff" fill-rule="evenodd"/>
<path d="M2201 442l452 146l-1 8l-4 12l-21 42l-14 45l-21 50l-6 18l0 13l5 7l9 3l15 0l11-2l13-4l53-25l49-19l17-9l28-19l23-20l9-11l17-30l462 150l-382 395l-449-146l15-9l5-5l8-11l8-19l11-46l8-25l5-12l19-39l3-10l0-5l-3-9l-6-6l-9-4l-11 0l-15 3l-33 10l-48 12l-19 7l-10 5l-21 14l-17 16l-14 16l-20 29l-10 11l-7 4l-8 5l-11 3l-15 2l-451-145l381-396z" fill="#0055ff" fill-rule="evenodd"/>
<path d="M2201 442l407 132l-3 13l-5 12l-19 36l-6 12l-3 13l-3 34l-6 19l-14 27l-13 21l-12 17l-10 11l-23 20l-21 14l-21 8l-29 6l-8 3l-8 4l-65 56l-36 38l-12 10l-7 5l-9 4l-10 3l-14 3l-33 3l-398-128l381-396zM2886 664l411 133l-382 395l-401-130l8-4l7-5l5-6l7-11l3-13l5-41l5-19l13-31l24-48l5-13l7-25l3-6l5-6l6-5l8-5l55-24l52-32l64-36l23-11l39-17l16-9l7-5l5-5l3-6l0-7l-3-8z" fill="#00aaff" fill-rule="evenodd"/>
<path d="M2201 442l369 119l-17 16l-9 11l-9 11l-6 12l-6 19l-2 14l0 14l3 22l-1 7l-1 6l-3 6l-5 5l-6 5l-23 14l-6 5l-4 6l-1 7l3 14l0 8l-1 6l-3 6l-4 6l-5 5l-7 5l-10 5l-16 5l-36 5l-11 4l-8 4l-6 5l-5 6l-3 6l-6 19l-3 6l-8 11l-16 16l-28 26l-13 10l-14 9l-18 8l-22 6l-31 5l-32 4l-351-113l381-396zM2954 693l7-5l336 109l-382 395l-356-116l12-10l4-5l6-12l5-20l3-34l3-13l4-13l22-49l8-18l14-24l7-11l10-11l14-10l43-21l15-9l46-41l14-9l15-10l27-12l44-14l29-11l26-13l24-13z" fill="#00d0ff" fill-rule="evenodd"/>
<path d="M2201 442l318 103l-3 6l-5 5l-10 11l-36 30l-5 6l-3 6l-1 7l1 7l10 28l3 18l-1 7l-1 7l-3 5l-19 22l-7 12l-3 6l0 7l3 22l-1 7l-2 6l-5 6l-8 4l-10 4l-35 9l-11 4l-16 9l-6 5l-10 11l-4 8l-11 22l-8 11l-11 11l-9 8l-24 16l-18 9l-21 7l-57 17l-27 5l-17 1l-308-99l381-396zM3014 705l283 92l-382 395l-307-100l13-23l9-19l3-13l3-27l3-13l15-30l4-13l2-27l3-13l3-6l7-12l15-16l19-15l40-22l14-9l13-10l29-26l21-14l11-5l18-7l81-23l39-14l10-5l15-9l6-5l10-11z" fill="#17dcc0" fill-rule="evenodd"/>
<path d="M2201 442l252 81l4 16l-1 6l-3 6l-11 11l-26 19l-10 11l-6 12l-1 7l1 8l17 33l3 11l1 11l-2 15l-10 31l-3 34l-3 6l-4 5l-8 5l-38 15l-17 9l-14 10l-35 31l-13 9l-18 8l-45 15l-7 4l-7 4l-22 21l-13 10l-17 9l-11 3l-13 3l-35 3l-266-86l381-396zM3062 721l235 76l-382 395l-260-85l8-11l10-18l8-18l8-19l3-15l3-32l4-12l10-23l2-9l-1-7l-3-19l1-9l3-7l9-11l11-10l14-10l62-36l35-23l15-9l31-12l80-23l40-15l18-8l15-9l13-10l4-5l4-6z" fill="#00fa8a" fill-rule="evenodd"/>
<path d="M2201 442l185 59l1 8l-6 19l-1 7l-1 28l-8 32l-2 13l2 15l7 23l2 8l0 7l-5 33l0 27l-1 15l-3 6l-3 7l-4 5l-13 10l-51 25l-39 23l-17 9l-22 6l-37 9l-21 8l-8 4l-13 10l-25 27l-7 5l-8 4l-12 3l-34 6l-18 6l-219-71l381-396zM3141 746l156 51l-382 395l-204-67l4-5l4-13l4-41l8-39l4-27l2-6l3-6l4-6l6-5l32-19l10-9l3-6l-1-10l-16-24l0-7l2-6l5-6l6-5l16-9l49-19l16-8l30-19l18-8l80-28l72-21l20-7l34-15l15-5z" fill="#2af53a" fill-rule="evenodd"/>
<path d="M2220 455l11-4l38 13l11 8l30 19l6 5l6 6l3 8l0 7l-3 6l-10 18l-2 6l6 9l14 13l5 7l4 9l3 57l-1 6l-2 7l-11 17l-3 6l-2 7l0 7l8 23l1 8l0 7l-2 6l-4 6l-6 5l-7 5l-9 4l-14 4l-39 7l-11 3l-8 5l-6 5l-15 16l-6 5l-8 4l-49 19l-46 19l-16 5l-14 1l-37 2l-13 3l-31 11l-19 2l-21-3l-18-6l-24-13l-18-7l-12-2l-31-2l-20-4l361-376l12 2l19-1zM3229 775l22 7l0 7l4 9l20 22l-321 332l-34 6l-12 3l-10 4l-6 5l-1 7l4 8l-70-23l-6-7l-28-21l-7-6l-5-6l-5-11l-13-45l0-12l2-17l8-25l6-12l9-11l29-26l8-11l3-6l3-12l-2-23l1-7l4-5l7-5l8-5l36-16l42-21l20-8l46-15l16-5l17-3l24-2l37-1l26-4l23-7l40-15l46-13l9-4zM1863 852l13 2l9 4l3 2l-25-8z" fill="#66fa00" fill-rule="evenodd"/>
<path d="M3217 827l13 3l9 3l16 8l-287 297l-38 2l-23-1l-22-3l-19-5l-9-3l-7-5l-6-6l-4-8l-1-5l0-20l-2-9l-6-7l-12-12l-5-7l-4-9l1-8l4-13l10-25l9-16l19-31l14-30l4-6l11-10l14-10l16-9l27-12l80-23l14-3l16-1l60-2l16-2l59-11l13-2l20 1zM2150 495l1-1l10 1l19 6l16 8l8 5l6 6l4 8l7 18l4 8l9 11l17 12l33 15l7 5l7 6l4 8l1 12l-3 12l-12 24l-4 13l0 14l5 23l1 7l-2 7l-3 5l-7 5l-10 4l-53 11l-21 7l-15 9l-23 21l-7 5l-15 7l-16 5l-13 1l-11-1l-39-10l-10-1l-12 0l-22 3l-41 12l-20 4l-20 0l-57-2l-26 2l303-315z" fill="#aafa0a" fill-rule="evenodd"/>
<path d="M3213 854l14 3l9 3l-255 264l-25 1l-22-2l-19-6l-8-4l-6-5l-6-7l-2-8l-3-22l-3-8l-15-26l-3-7l0-7l1-7l8-19l0-6l0-20l4-14l6-12l8-12l10-11l11-10l14-9l9-5l11-3l40-8l10-4l26-12l11-4l13-3l14-1l61 0l64-10l23 1zM2124 522l1-1l11 1l10 2l9 3l8 4l13 12l23 26l38 32l7 9l2 8l-2 6l-11 18l-1 6l2 8l12 25l3 10l1 12l-2 6l-5 6l-7 5l-10 3l-57 17l-46 20l-18 6l-23 2l-39 0l-21 2l-21 4l-39 12l-24 3l-24 1l-43-5l253-263z" fill="#ffff00" fill-rule="evenodd"/>
<path d="M3207 880l10 0l-222 229l-23 0l-11-2l-9-3l-7-5l-4-4l-3-8l-1-21l-4-23l0-7l1-6l9-19l2-6l1-6l-2-10l-5-7l-11-14l-2-4l-2-8l0-7l3-6l4-5l6-5l8-5l10-4l14-2l42-2l12-2l13-2l10-4l27-12l11-4l15-2l34-2l14-1l43-10l17-1zM2109 538l0-1l9 3l9 4l15 10l24 24l9 9l5 9l1 8l-1 6l-9 19l-1 6l2 8l5 9l22 21l7 9l3 8l-1 7l-3 6l-6 5l-9 4l-20 8l-56 16l-21 5l-21 3l-55 3l-14 3l-12 3l-42 13l-14 2l-12 1l-11-2l-9-3l-7-5l213-221z" fill="#ffa500" fill-rule="evenodd"/>
<path d="M3186 908l5-1l-175 181l-6-6l-10-24l-11-17l-4-9l-2-9l-2-20l-1-8l-3-8l-14-25l-1-7l3-6l8-5l12-3l57-4l59-12l53-5l17-5l15-7zM2088 559l4-4l7 6l11 13l10 14l5 11l1 8l1 21l3 8l4 9l7 9l20 20l3 5l2 4l1 7l-4 6l-7 5l-19 8l-31 6l-40 5l-49 0l-25 1l-20 5l-22 7l-12 2l-8 1l-11-1l169-176z" fill="#ff5500" fill-rule="evenodd"/>
<path d="M3104 959l11 2l8 3l8 5l-58 60l-17 5l-12 0l-9-3l-7-5l-5-8l-2-9l-1-22l0-7l1-6l6-5l11-4l47-5l19-1zM2040 621l11 1l9 4l7 5l30 37l2 7l-5 6l-12 3l-19 0l-11 0l-29-5l-40-10l46-49l11 1z" fill="#ff0000" fill-rule="evenodd"/>
</g>
<clipPath id="pR"><polygon points="2201.3,441.6 3297.1,797.2 2915.4,1191.5 1820.1,837.9"/></clipPath>
<g clip-path="url(#pR)">
<path d="M1820.1 837.9L2915.4 1191.5" stroke="#35f04a" stroke-width="5.5" fill="none"/>
<path d="M2201.3 441.6L3297.1 797.2" stroke="#35f04a" stroke-width="4.5" fill="none"/>
<path d="M2201.3 441.6L1820.1 837.9" stroke="#19d8c8" stroke-width="4" fill="none"/>
<path d="M3297.1 797.2L2915.4 1191.5" stroke="#19d8c8" stroke-width="4.5" fill="none"/>
<path d="M1820.1 837.9L2915.4 1191.5" stroke="#00c8f0" stroke-width="2" fill="none"/>
<path d="M2201.3 441.6L3297.1 797.2" stroke="#00c8f0" stroke-width="1.6" fill="none"/>
<path d="M2222.1 448.4L2213.4 453.6L2201.5 455.6L2189.5 453.9L2180.7 448.9L2177.4 441.9L2180.5 434.8L2189.2 429.6L2201.1 427.6L2213.1 429.3L2221.9 434.3L2225.2 441.3L2222.1 448.4M2201.3 441.6L2216.1 452.5M2201.3 441.6L2198.4 455.5M2201.3 441.6L2182.5 450.4M2201.3 441.6L2177.5 440.1M2201.3 441.6L2186.5 430.7M2201.3 441.6L2204.2 427.7M2201.3 441.6L2220.1 432.8M2201.3 441.6L2225.1 443.1M2145.9 527.6L2137.2 532.8L2125.2 534.9L2113.2 533.1L2104.4 528.1L2101.1 521.2L2104.2 514.1L2112.9 508.9L2124.9 506.8L2136.9 508.6L2145.7 513.6L2149 520.6L2145.9 527.6M2125.1 520.9L2139.8 531.8M2125.1 520.9L2122.2 534.8M2125.1 520.9L2106.2 529.7M2125.1 520.9L2101.3 519.4M2125.1 520.9L2110.3 509.9M2125.1 520.9L2127.9 506.9M2125.1 520.9L2143.9 512.1M2125.1 520.9L2148.8 522.4M2069.6 606.9L2060.9 612.1L2049 614.1L2037 612.4L2028.2 607.4L2024.9 600.4L2028 593.4L2036.7 588.1L2048.6 586.1L2060.6 587.8L2069.5 592.9L2072.8 599.8L2069.6 606.9M2048.8 600.1L2063.6 611M2048.8 600.1L2045.9 614.1M2048.8 600.1L2030 608.9M2048.8 600.1L2025.1 598.6M2048.8 600.1L2034.1 589.2M2048.8 600.1L2051.7 586.2M2048.8 600.1L2067.7 591.3M2048.8 600.1L2072.6 601.6M1993.4 686.1L1984.7 691.4L1972.8 693.4L1960.8 691.7L1951.9 686.7L1948.6 679.7L1951.8 672.6L1960.5 667.4L1972.4 665.4L1984.4 667.1L1993.2 672.1L1996.5 679.1L1993.4 686.1M1972.6 679.4L1987.3 690.3M1972.6 679.4L1969.7 693.3M1972.6 679.4L1953.7 688.2M1972.6 679.4L1948.8 677.9M1972.6 679.4L1957.8 668.5M1972.6 679.4L1975.5 665.4M1972.6 679.4L1991.4 670.6M1972.6 679.4L1996.3 680.9M1917.2 765.4L1908.5 770.6L1896.5 772.6L1884.5 770.9L1875.7 765.9L1872.4 759L1875.5 751.9L1884.2 746.7L1896.2 744.6L1908.2 746.4L1917 751.4L1920.3 758.3L1917.2 765.4M1896.3 758.6L1911.1 769.5M1896.3 758.6L1893.5 772.6M1896.3 758.6L1877.5 767.4M1896.3 758.6L1872.6 757.2M1896.3 758.6L1881.6 747.7M1896.3 758.6L1899.2 744.7M1896.3 758.6L1915.2 749.8M1896.3 758.6L1920.1 760.1M1840.9 844.6L1832.2 849.9L1820.3 851.9L1808.3 850.2L1799.5 845.2L1796.2 838.2L1799.3 831.2L1808 825.9L1819.9 823.9L1831.9 825.6L1840.7 830.6L1844 837.6L1840.9 844.6M1820.1 837.9L1834.9 848.8M1820.1 837.9L1817.2 851.8M1820.1 837.9L1801.3 846.7M1820.1 837.9L1796.3 836.4M1820.1 837.9L1805.3 827M1820.1 837.9L1823 824M1820.1 837.9L1838.9 829.1M1820.1 837.9L1843.9 839.4M2359.1 492.8L2350.4 498L2338.4 500.1L2326.5 498.3L2317.6 493.3L2314.3 486.3L2317.5 479.3L2326.2 474.1L2338.1 472L2350.1 473.8L2358.9 478.8L2362.2 485.8L2359.1 492.8M2338.3 486.1L2353 497M2338.3 486.1L2335.4 500M2338.3 486.1L2319.4 494.8M2338.3 486.1L2314.5 484.5M2338.3 486.1L2323.5 475.1M2338.3 486.1L2341.2 472.1M2338.3 486.1L2357.1 477.3M2338.3 486.1L2362 487.6M2282.8 572L2274.1 577.2L2262.2 579.3L2250.2 577.5L2241.4 572.5L2238.1 565.6L2241.2 558.5L2249.9 553.3L2261.8 551.3L2273.8 553L2282.7 558L2286 565L2282.8 572M2262 565.3L2276.8 576.2M2262 565.3L2259.1 579.2M2262 565.3L2243.2 574.1M2262 565.3L2238.3 563.8M2262 565.3L2247.3 554.3M2262 565.3L2264.9 551.3M2262 565.3L2280.9 556.5M2262 565.3L2285.8 566.8M2206.6 651.2L2197.9 656.4L2185.9 658.5L2174 656.7L2165.1 651.7L2161.8 644.8L2165 637.7L2173.7 632.5L2185.6 630.5L2197.6 632.2L2206.4 637.2L2209.7 644.2L2206.6 651.2M2185.8 644.5L2200.5 655.4M2185.8 644.5L2182.9 658.4M2185.8 644.5L2166.9 653.3M2185.8 644.5L2162 643M2185.8 644.5L2171 633.6M2185.8 644.5L2188.7 630.5M2185.8 644.5L2204.6 635.7M2185.8 644.5L2209.5 646M2130.3 730.4L2121.6 735.6L2109.7 737.7L2097.7 736L2088.9 730.9L2085.6 724L2088.7 716.9L2097.4 711.7L2109.3 709.7L2121.3 711.4L2130.2 716.4L2133.5 723.4L2130.3 730.4M2109.5 723.7L2124.3 734.6M2109.5 723.7L2106.6 737.6M2109.5 723.7L2090.7 732.5M2109.5 723.7L2085.8 722.2M2109.5 723.7L2094.8 712.8M2109.5 723.7L2112.4 709.8M2109.5 723.7L2128.4 714.9M2109.5 723.7L2133.3 725.2M2054.1 809.6L2045.4 814.9L2033.4 816.9L2021.4 815.2L2012.6 810.2L2009.3 803.2L2012.5 796.2L2021.2 790.9L2033.1 788.9L2045.1 790.6L2053.9 795.6L2057.2 802.6L2054.1 809.6M2033.3 802.9L2048 813.8M2033.3 802.9L2030.4 816.8M2033.3 802.9L2014.4 811.7M2033.3 802.9L2009.5 801.4M2033.3 802.9L2018.5 792M2033.3 802.9L2036.2 789M2033.3 802.9L2052.1 794.1M2033.3 802.9L2057 804.4M1977.8 888.8L1969.1 894.1L1957.2 896.1L1945.2 894.4L1936.4 889.4L1933.1 882.4L1936.2 875.4L1944.9 870.1L1956.8 868.1L1968.8 869.8L1977.7 874.8L1980.9 881.8L1977.8 888.8M1957 882.1L1971.8 893M1957 882.1L1954.1 896M1957 882.1L1938.2 890.9M1957 882.1L1933.3 880.6M1957 882.1L1942.3 871.2M1957 882.1L1959.9 868.2M1957 882.1L1975.9 873.3M1957 882.1L1980.8 883.6M2496.1 537.3L2487.4 542.5L2475.4 544.5L2463.4 542.8L2454.6 537.7L2451.3 530.8L2454.4 523.7L2463.1 518.5L2475.1 516.5L2487.1 518.2L2495.9 523.3L2499.2 530.2L2496.1 537.3M2475.2 530.5L2490 541.4M2475.2 530.5L2472.4 544.4M2475.2 530.5L2456.4 539.3M2475.2 530.5L2451.5 529M2475.2 530.5L2460.5 519.6M2475.2 530.5L2478.1 516.6M2475.2 530.5L2494.1 521.7M2475.2 530.5L2499 532M2419.8 616.4L2411.1 621.6L2399.2 623.7L2387.2 621.9L2378.3 616.9L2375 610L2378.2 602.9L2386.9 597.7L2398.8 595.7L2410.8 597.4L2419.6 602.4L2422.9 609.4L2419.8 616.4M2399 609.7L2413.7 620.6M2399 609.7L2396.1 623.6M2399 609.7L2380.1 618.4M2399 609.7L2375.2 608.2M2399 609.7L2384.2 598.8M2399 609.7L2401.9 595.7M2399 609.7L2417.8 600.9M2399 609.7L2422.8 611.2M2343.5 695.6L2334.8 700.8L2322.9 702.8L2310.9 701.1L2302.1 696.1L2298.8 689.1L2301.9 682.1L2310.6 676.8L2322.5 674.8L2334.5 676.6L2343.4 681.6L2346.7 688.5L2343.5 695.6M2322.7 688.8L2337.5 699.7M2322.7 688.8L2319.8 702.7M2322.7 688.8L2303.9 697.6M2322.7 688.8L2299 687.3M2322.7 688.8L2308 677.9M2322.7 688.8L2325.6 674.9M2322.7 688.8L2341.6 680M2322.7 688.8L2346.5 690.3M2267.3 774.7L2258.6 779.9L2246.6 782L2234.6 780.2L2225.8 775.2L2222.5 768.3L2225.6 761.2L2234.3 756L2246.3 754L2258.3 755.7L2267.1 760.7L2270.4 767.7L2267.3 774.7M2246.5 768L2261.2 778.9M2246.5 768L2243.6 781.9M2246.5 768L2227.6 776.8M2246.5 768L2222.7 766.5M2246.5 768L2231.7 757.1M2246.5 768L2249.3 754.1M2246.5 768L2265.3 759.2M2246.5 768L2270.2 769.5M2191 853.9L2182.3 859.1L2170.4 861.1L2158.4 859.4L2149.5 854.4L2146.3 847.5L2149.4 840.4L2158.1 835.2L2170 833.2L2182 834.9L2190.8 839.9L2194.1 846.8L2191 853.9M2170.2 847.1L2184.9 858M2170.2 847.1L2167.3 861.1M2170.2 847.1L2151.3 855.9M2170.2 847.1L2146.4 845.7M2170.2 847.1L2155.4 836.3M2170.2 847.1L2173.1 833.2M2170.2 847.1L2189 838.3M2170.2 847.1L2194 848.6M2114.7 933L2106 938.3L2094.1 940.3L2082.1 938.6L2073.3 933.6L2070 926.6L2073.1 919.6L2081.8 914.3L2093.8 912.3L2105.7 914L2114.6 919L2117.9 926L2114.7 933M2093.9 926.3L2108.7 937.2M2093.9 926.3L2091 940.2M2093.9 926.3L2075.1 935.1M2093.9 926.3L2070.2 924.8M2093.9 926.3L2079.2 915.4M2093.9 926.3L2096.8 912.4M2093.9 926.3L2112.8 917.5M2093.9 926.3L2117.7 927.8M2633 581.7L2624.3 586.9L2612.4 588.9L2600.4 587.2L2591.6 582.2L2588.3 575.2L2591.4 568.2L2600.1 563L2612.1 561L2624 562.7L2632.9 567.7L2636.2 574.7L2633 581.7M2612.2 575L2627 585.9M2612.2 575L2609.3 588.9M2612.2 575L2593.4 583.7M2612.2 575L2588.5 573.4M2612.2 575L2597.5 564M2612.2 575L2615.1 561M2612.2 575L2631.1 566.2M2612.2 575L2636 576.5M2556.8 660.8L2548.1 666L2536.1 668.1L2524.1 666.3L2515.3 661.3L2512 654.3L2515.1 647.3L2523.8 642.1L2535.8 640.1L2547.8 641.8L2556.6 646.8L2559.9 653.8L2556.8 660.8M2535.9 654.1L2550.7 665M2535.9 654.1L2533.1 668M2535.9 654.1L2517.1 662.8M2535.9 654.1L2512.2 652.6M2535.9 654.1L2521.2 643.2M2535.9 654.1L2538.8 640.1M2535.9 654.1L2554.8 645.3M2535.9 654.1L2559.7 655.6M2480.5 739.9L2471.8 745.1L2459.8 747.2L2447.8 745.4L2439 740.4L2435.7 733.5L2438.9 726.4L2447.6 721.2L2459.5 719.2L2471.5 720.9L2480.3 725.9L2483.6 732.9L2480.5 739.9M2459.7 733.2L2474.4 744.1M2459.7 733.2L2456.8 747.1M2459.7 733.2L2440.8 741.9M2459.7 733.2L2435.9 731.7M2459.7 733.2L2444.9 722.3M2459.7 733.2L2462.6 719.3M2459.7 733.2L2478.5 724.4M2459.7 733.2L2483.4 734.7M2404.2 819L2395.5 824.2L2383.6 826.3L2371.6 824.5L2362.7 819.5L2359.5 812.6L2362.6 805.5L2371.3 800.3L2383.2 798.3L2395.2 800L2404 805L2407.3 812L2404.2 819M2383.4 812.3L2398.1 823.2M2383.4 812.3L2380.5 826.2M2383.4 812.3L2364.5 821.1M2383.4 812.3L2359.6 810.8M2383.4 812.3L2368.6 801.4M2383.4 812.3L2386.3 798.4M2383.4 812.3L2402.2 803.5M2383.4 812.3L2407.2 813.8M2327.9 898.1L2319.2 903.3L2307.3 905.4L2295.3 903.7L2286.5 898.6L2283.2 891.7L2286.3 884.7L2295 879.4L2306.9 877.4L2318.9 879.1L2327.8 884.1L2331.1 891.1L2327.9 898.1M2307.1 891.4L2321.9 902.3M2307.1 891.4L2304.2 905.3M2307.1 891.4L2288.3 900.2M2307.1 891.4L2283.4 889.9M2307.1 891.4L2292.4 880.5M2307.1 891.4L2310 877.5M2307.1 891.4L2326 882.6M2307.1 891.4L2330.9 892.9M2251.6 977.2L2242.9 982.4L2231 984.5L2219 982.8L2210.2 977.8L2206.9 970.8L2210 963.8L2218.7 958.6L2230.7 956.5L2242.7 958.2L2251.5 963.2L2254.8 970.2L2251.6 977.2M2230.8 970.5L2245.6 981.4M2230.8 970.5L2227.9 984.4M2230.8 970.5L2212 979.3M2230.8 970.5L2207.1 969M2230.8 970.5L2216.1 959.6M2230.8 970.5L2233.7 956.6M2230.8 970.5L2249.7 961.7M2230.8 970.5L2254.6 972M2770 626.2L2761.3 631.4L2749.4 633.4L2737.4 631.7L2728.5 626.6L2725.3 619.7L2728.4 612.6L2737.1 607.4L2749 605.4L2761 607.1L2769.9 612.2L2773.1 619.1L2770 626.2M2749.2 619.4L2764 630.3M2749.2 619.4L2746.3 633.3M2749.2 619.4L2730.3 628.2M2749.2 619.4L2725.4 617.9M2749.2 619.4L2734.4 608.5M2749.2 619.4L2752.1 605.5M2749.2 619.4L2768.1 610.6M2749.2 619.4L2773 620.9M2693.7 705.2L2685 710.4L2673.1 712.4L2661.1 710.7L2652.3 705.7L2649 698.7L2652.1 691.7L2660.8 686.5L2672.7 684.5L2684.7 686.2L2693.6 691.2L2696.9 698.2L2693.7 705.2M2672.9 698.5L2687.7 709.4M2672.9 698.5L2670 712.4M2672.9 698.5L2654.1 707.2M2672.9 698.5L2649.1 697M2672.9 698.5L2658.2 687.6M2672.9 698.5L2675.8 684.6M2672.9 698.5L2691.8 689.7M2672.9 698.5L2696.7 700M2617.4 784.3L2608.7 789.5L2596.8 791.5L2584.8 789.8L2576 784.8L2572.7 777.8L2575.8 770.8L2584.5 765.6L2596.5 763.5L2608.4 765.3L2617.3 770.3L2620.6 777.2L2617.4 784.3M2596.6 777.5L2611.4 788.4M2596.6 777.5L2593.7 791.4M2596.6 777.5L2577.8 786.3M2596.6 777.5L2572.9 776M2596.6 777.5L2581.9 766.6M2596.6 777.5L2599.5 763.6M2596.6 777.5L2615.5 768.7M2596.6 777.5L2620.4 779M2541.1 863.3L2532.4 868.5L2520.5 870.6L2508.5 868.8L2499.7 863.8L2496.4 856.9L2499.5 849.8L2508.2 844.6L2520.2 842.6L2532.2 844.3L2541 849.3L2544.3 856.3L2541.1 863.3M2520.3 856.6L2535.1 867.5M2520.3 856.6L2517.4 870.5M2520.3 856.6L2501.5 865.4M2520.3 856.6L2496.6 855.1M2520.3 856.6L2505.6 845.7M2520.3 856.6L2523.2 842.7M2520.3 856.6L2539.2 847.8M2520.3 856.6L2544.1 858.1M2464.9 942.4L2456.2 947.6L2444.2 949.6L2432.2 947.9L2423.4 942.9L2420.1 935.9L2423.2 928.9L2431.9 923.7L2443.9 921.7L2455.9 923.4L2464.7 928.4L2468 935.3L2464.9 942.4M2444 935.6L2458.8 946.5M2444 935.6L2441.1 949.5M2444 935.6L2425.2 944.4M2444 935.6L2420.3 934.2M2444 935.6L2429.3 924.8M2444 935.6L2446.9 921.7M2444 935.6L2462.9 926.9M2444 935.6L2467.8 937.1M2388.6 1021.4L2379.9 1026.6L2367.9 1028.7L2355.9 1027L2347.1 1022L2343.8 1015L2346.9 1008L2355.6 1002.8L2367.6 1000.7L2379.6 1002.4L2388.4 1007.4L2391.7 1014.4L2388.6 1021.4M2367.8 1014.7L2382.5 1025.6M2367.8 1014.7L2364.9 1028.6M2367.8 1014.7L2348.9 1023.5M2367.8 1014.7L2344 1013.2M2367.8 1014.7L2353 1003.8M2367.8 1014.7L2370.6 1000.8M2367.8 1014.7L2386.6 1005.9M2367.8 1014.7L2391.5 1016.2M2907 670.6L2898.3 675.8L2886.3 677.8L2874.3 676.1L2865.5 671.1L2862.2 664.1L2865.4 657.1L2874.1 651.9L2886 649.9L2898 651.6L2906.8 656.6L2910.1 663.6L2907 670.6M2886.2 663.9L2900.9 674.8M2886.2 663.9L2883.3 677.8M2886.2 663.9L2867.3 672.6M2886.2 663.9L2862.4 662.3M2886.2 663.9L2871.4 652.9M2886.2 663.9L2889.1 649.9M2886.2 663.9L2905 655.1M2886.2 663.9L2909.9 665.4M2830.7 749.6L2822 754.8L2810 756.8L2798 755.1L2789.2 750.1L2785.9 743.1L2789.1 736.1L2797.8 730.9L2809.7 728.9L2821.7 730.6L2830.5 735.6L2833.8 742.6L2830.7 749.6M2809.9 742.9L2824.6 753.8M2809.9 742.9L2807 756.8M2809.9 742.9L2791 751.6M2809.9 742.9L2786.1 741.3M2809.9 742.9L2795.1 732M2809.9 742.9L2812.8 729M2809.9 742.9L2828.7 734.1M2809.9 742.9L2833.6 744.4M2754.4 828.6L2745.7 833.8L2733.7 835.8L2721.7 834.1L2712.9 829.1L2709.6 822.2L2712.8 815.1L2721.5 809.9L2733.4 807.9L2745.4 809.6L2754.2 814.6L2757.5 821.6L2754.4 828.6M2733.6 821.9L2748.3 832.8M2733.6 821.9L2730.7 835.8M2733.6 821.9L2714.7 830.6M2733.6 821.9L2709.8 820.4M2733.6 821.9L2718.8 811M2733.6 821.9L2736.5 808M2733.6 821.9L2752.4 813.1M2733.6 821.9L2757.3 823.4M2678.1 907.6L2669.4 912.8L2657.4 914.9L2645.4 913.1L2636.6 908.1L2633.3 901.2L2636.5 894.1L2645.2 888.9L2657.1 886.9L2669.1 888.6L2677.9 893.6L2681.2 900.6L2678.1 907.6M2657.3 900.9L2672 911.8M2657.3 900.9L2654.4 914.8M2657.3 900.9L2638.4 909.6M2657.3 900.9L2633.5 899.4M2657.3 900.9L2642.5 890M2657.3 900.9L2660.2 887M2657.3 900.9L2676.1 892.1M2657.3 900.9L2681 902.4M2601.8 986.6L2593.1 991.8L2581.1 993.9L2569.1 992.1L2560.3 987.1L2557 980.2L2560.2 973.2L2568.9 967.9L2580.8 965.9L2592.8 967.6L2601.6 972.6L2604.9 979.6L2601.8 986.6M2581 979.9L2595.7 990.8M2581 979.9L2578.1 993.8M2581 979.9L2562.1 988.7M2581 979.9L2557.2 978.4M2581 979.9L2566.2 969M2581 979.9L2583.9 966M2581 979.9L2599.8 971.1M2581 979.9L2604.7 981.4M2525.5 1065.6L2516.8 1070.8L2504.8 1072.9L2492.8 1071.1L2484 1066.1L2480.7 1059.2L2483.9 1052.2L2492.6 1047L2504.5 1044.9L2516.5 1046.7L2525.3 1051.7L2528.6 1058.6L2525.5 1065.6M2504.7 1058.9L2519.4 1069.8M2504.7 1058.9L2501.8 1072.8M2504.7 1058.9L2485.8 1067.7M2504.7 1058.9L2480.9 1057.4M2504.7 1058.9L2489.9 1048M2504.7 1058.9L2507.6 1045M2504.7 1058.9L2523.5 1050.1M2504.7 1058.9L2528.4 1060.4M3044 715.1L3035.3 720.3L3023.3 722.3L3011.3 720.5L3002.5 715.5L2999.2 708.6L3002.3 701.5L3011 696.3L3023 694.3L3035 696.1L3043.8 701.1L3047.1 708L3044 715.1M3023.1 708.3L3037.9 719.2M3023.1 708.3L3020.3 722.2M3023.1 708.3L3004.3 717.1M3023.1 708.3L2999.4 706.8M3023.1 708.3L3008.4 697.4M3023.1 708.3L3026 694.4M3023.1 708.3L3042 699.5M3023.1 708.3L3046.9 709.8M2967.7 794L2958.9 799.2L2947 801.2L2935 799.5L2926.2 794.5L2922.9 787.5L2926 780.5L2934.7 775.3L2946.7 773.3L2958.7 775L2967.5 780L2970.8 787L2967.7 794M2946.8 787.3L2961.6 798.2M2946.8 787.3L2943.9 801.2M2946.8 787.3L2928 796M2946.8 787.3L2923.1 785.7M2946.8 787.3L2932.1 776.4M2946.8 787.3L2949.7 773.4M2946.8 787.3L2965.7 778.5M2946.8 787.3L2970.6 788.8M2891.3 873L2882.6 878.2L2870.7 880.2L2858.7 878.5L2849.9 873.4L2846.6 866.5L2849.7 859.5L2858.4 854.3L2870.4 852.2L2882.3 854L2891.2 859L2894.5 865.9L2891.3 873M2870.5 866.2L2885.3 877.1M2870.5 866.2L2867.6 880.1M2870.5 866.2L2851.7 875M2870.5 866.2L2846.8 864.7M2870.5 866.2L2855.8 855.3M2870.5 866.2L2873.4 852.3M2870.5 866.2L2889.4 857.5M2870.5 866.2L2894.3 867.7M2815 951.9L2806.3 957.1L2794.4 959.1L2782.4 957.4L2773.6 952.4L2770.3 945.5L2773.4 938.4L2782.1 933.2L2794 931.2L2806 932.9L2814.9 937.9L2818.1 944.9L2815 951.9M2794.2 945.2L2809 956.1M2794.2 945.2L2791.3 959.1M2794.2 945.2L2775.4 953.9M2794.2 945.2L2770.4 943.7M2794.2 945.2L2779.5 934.3M2794.2 945.2L2797.1 931.3M2794.2 945.2L2813.1 936.4M2794.2 945.2L2818 946.7M2738.7 1030.9L2730 1036.1L2718.1 1038.1L2706.1 1036.4L2697.2 1031.4L2694 1024.4L2697.1 1017.4L2705.8 1012.2L2717.7 1010.2L2729.7 1011.9L2738.5 1016.9L2741.8 1023.8L2738.7 1030.9M2717.9 1024.1L2732.6 1035M2717.9 1024.1L2715 1038M2717.9 1024.1L2699 1032.9M2717.9 1024.1L2694.1 1022.6M2717.9 1024.1L2703.1 1013.3M2717.9 1024.1L2720.8 1010.3M2717.9 1024.1L2736.7 1015.4M2717.9 1024.1L2741.7 1025.6M2662.4 1109.8L2653.7 1115L2641.7 1117.1L2629.7 1115.3L2620.9 1110.3L2617.6 1103.4L2620.8 1096.4L2629.5 1091.2L2641.4 1089.1L2653.4 1090.9L2662.2 1095.9L2665.5 1102.8L2662.4 1109.8M2641.6 1103.1L2656.3 1114M2641.6 1103.1L2638.7 1117M2641.6 1103.1L2622.7 1111.9M2641.6 1103.1L2617.8 1101.6M2641.6 1103.1L2626.8 1092.2M2641.6 1103.1L2644.5 1089.2M2641.6 1103.1L2660.4 1094.3M2641.6 1103.1L2665.3 1104.6M3180.9 759.5L3172.2 764.7L3160.3 766.7L3148.3 765L3139.5 760L3136.2 753L3139.3 746L3148 740.8L3160 738.8L3172 740.5L3180.8 745.5L3184.1 752.5L3180.9 759.5M3160.1 752.8L3174.9 763.6M3160.1 752.8L3157.2 766.6M3160.1 752.8L3141.3 761.5M3160.1 752.8L3136.4 751.2M3160.1 752.8L3145.4 741.9M3160.1 752.8L3163 738.9M3160.1 752.8L3179 744M3160.1 752.8L3183.9 754.3M3104.6 838.4L3095.9 843.6L3084 845.6L3072 843.9L3063.1 838.9L3059.9 831.9L3063 824.9L3071.7 819.7L3083.6 817.7L3095.6 819.4L3104.5 824.4L3107.7 831.4L3104.6 838.4M3083.8 831.7L3098.6 842.6M3083.8 831.7L3080.9 845.5M3083.8 831.7L3064.9 840.4M3083.8 831.7L3060 830.1M3083.8 831.7L3069 820.8M3083.8 831.7L3086.7 817.8M3083.8 831.7L3102.7 822.9M3083.8 831.7L3107.6 833.2M3028.3 917.3L3019.6 922.5L3007.6 924.5L2995.6 922.8L2986.8 917.8L2983.5 910.8L2986.7 903.8L2995.4 898.6L3007.3 896.6L3019.3 898.3L3028.1 903.3L3031.4 910.3L3028.3 917.3M3007.5 910.6L3022.2 921.5M3007.5 910.6L3004.6 924.5M3007.5 910.6L2988.6 919.3M3007.5 910.6L2983.7 909.1M3007.5 910.6L2992.7 899.7M3007.5 910.6L3010.4 896.7M3007.5 910.6L3026.3 901.8M3007.5 910.6L3031.2 912.1M2952 996.2L2943.3 1001.4L2931.3 1003.4L2919.3 1001.7L2910.5 996.7L2907.2 989.8L2910.3 982.7L2919 977.5L2931 975.5L2943 977.2L2951.8 982.3L2955.1 989.2L2952 996.2M2931.1 989.5L2945.9 1000.4M2931.1 989.5L2928.2 1003.4M2931.1 989.5L2912.3 998.2M2931.1 989.5L2907.4 988M2931.1 989.5L2916.4 978.6M2931.1 989.5L2934 975.6M2931.1 989.5L2950 980.7M2931.1 989.5L2954.9 991M2875.6 1075.1L2866.9 1080.3L2855 1082.3L2843 1080.6L2834.2 1075.6L2830.9 1068.7L2834 1061.7L2842.7 1056.4L2854.7 1054.4L2866.6 1056.2L2875.5 1061.2L2878.8 1068.1L2875.6 1075.1M2854.8 1068.4L2869.6 1079.3M2854.8 1068.4L2851.9 1082.3M2854.8 1068.4L2836 1077.1M2854.8 1068.4L2831.1 1066.9M2854.8 1068.4L2840.1 1057.5M2854.8 1068.4L2857.7 1054.5M2854.8 1068.4L2873.7 1059.6M2854.8 1068.4L2878.6 1069.9M2799.3 1154L2790.6 1159.2L2778.6 1161.3L2766.7 1159.5L2757.8 1154.5L2754.5 1147.6L2757.7 1140.6L2766.4 1135.4L2778.3 1133.3L2790.3 1135.1L2799.1 1140.1L2802.4 1147L2799.3 1154M2778.5 1147.3L2793.2 1158.2M2778.5 1147.3L2775.6 1161.2M2778.5 1147.3L2759.6 1156.1M2778.5 1147.3L2754.7 1145.8M2778.5 1147.3L2763.7 1136.4M2778.5 1147.3L2781.4 1133.4M2778.5 1147.3L2797.3 1138.5M2778.5 1147.3L2802.2 1148.8M3317.9 804L3309.2 809.2L3297.3 811.2L3285.3 809.4L3276.4 804.4L3273.2 797.5L3276.3 790.4L3285 785.2L3296.9 783.2L3308.9 785L3317.8 790L3321 796.9L3317.9 804M3297.1 797.2L3311.9 808.1M3297.1 797.2L3294.2 811.1M3297.1 797.2L3278.2 805.9M3297.1 797.2L3273.3 795.7M3297.1 797.2L3282.3 786.3M3297.1 797.2L3300 783.3M3297.1 797.2L3316 788.5M3297.1 797.2L3320.9 798.7M3241.6 882.8L3232.9 888L3220.9 890L3208.9 888.3L3200.1 883.3L3196.8 876.3L3199.9 869.3L3208.6 864.1L3220.6 862.1L3232.6 863.8L3241.4 868.8L3244.7 875.8L3241.6 882.8M3220.8 876.1L3235.5 886.9M3220.8 876.1L3217.9 889.9M3220.8 876.1L3201.9 884.8M3220.8 876.1L3197 874.5M3220.8 876.1L3206 865.2M3220.8 876.1L3223.7 862.2M3220.8 876.1L3239.6 867.3M3220.8 876.1L3244.5 877.6M3165.2 961.7L3156.5 966.9L3144.6 968.9L3132.6 967.1L3123.8 962.1L3120.5 955.2L3123.6 948.2L3132.3 943L3144.3 941L3156.3 942.7L3165.1 947.7L3168.4 954.6L3165.2 961.7M3144.4 954.9L3159.2 965.8M3144.4 954.9L3141.5 968.8M3144.4 954.9L3125.6 963.7M3144.4 954.9L3120.7 953.4M3144.4 954.9L3129.7 944M3144.4 954.9L3147.3 941M3144.4 954.9L3163.3 946.2M3144.4 954.9L3168.2 956.4M3088.9 1040.5L3080.2 1045.7L3068.2 1047.7L3056.2 1046L3047.4 1041L3044.1 1034.1L3047.3 1027L3056 1021.8L3067.9 1019.8L3079.9 1021.6L3088.7 1026.6L3092 1033.5L3088.9 1040.5M3068.1 1033.8L3082.8 1044.7M3068.1 1033.8L3065.2 1047.7M3068.1 1033.8L3049.2 1042.5M3068.1 1033.8L3044.3 1032.3M3068.1 1033.8L3053.3 1022.9M3068.1 1033.8L3071 1019.9M3068.1 1033.8L3086.9 1025M3068.1 1033.8L3091.8 1035.3M3012.6 1119.4L3003.8 1124.6L2991.9 1126.6L2979.9 1124.9L2971.1 1119.9L2967.8 1112.9L2970.9 1105.9L2979.6 1100.7L2991.6 1098.7L3003.6 1100.4L3012.4 1105.4L3015.7 1112.4L3012.6 1119.4M2991.7 1112.6L3006.5 1123.5M2991.7 1112.6L2988.8 1126.5M2991.7 1112.6L2972.9 1121.4M2991.7 1112.6L2968 1111.1M2991.7 1112.6L2977 1101.8M2991.7 1112.6L2994.6 1098.8M2991.7 1112.6L3010.6 1103.9M2991.7 1112.6L3015.5 1114.1M2936.2 1198.2L2927.5 1203.4L2915.6 1205.4L2903.6 1203.7L2894.7 1198.7L2891.5 1191.8L2894.6 1184.8L2903.3 1179.6L2915.2 1177.6L2927.2 1179.3L2936.1 1184.3L2939.3 1191.2L2936.2 1198.2M2915.4 1191.5L2930.1 1202.4M2915.4 1191.5L2912.5 1205.4M2915.4 1191.5L2896.5 1200.3M2915.4 1191.5L2891.6 1190M2915.4 1191.5L2900.7 1180.6M2915.4 1191.5L2918.3 1177.6M2915.4 1191.5L2934.3 1182.7M2915.4 1191.5L2939.2 1193" stroke="#00003c" stroke-width="1" fill="none"/>
</g>
<path d="M2201.3 441.6L1820.1 837.9M2215 446L1833.8 842.3M2228.7 450.5L1847.5 846.7M2242.4 454.9L1861.2 851.2M2256.1 459.4L1874.9 855.6M2269.8 463.8L1888.6 860M2283.5 468.3L1902.2 864.4M2297.2 472.7L1915.9 868.8M2310.9 477.2L1929.6 873.3M2324.6 481.6L1943.3 877.7M2338.3 486.1L1957 882.1M2352 490.5L1970.7 886.5M2365.7 494.9L1984.4 890.9M2379.4 499.4L1998.1 895.4M2393.1 503.8L2011.8 899.8M2406.8 508.3L2025.5 904.2M2420.5 512.7L2039.2 908.6M2434.2 517.2L2052.9 913M2447.9 521.6L2066.5 917.5M2461.6 526.1L2080.2 921.9M2475.2 530.5L2093.9 926.3M2488.9 534.9L2107.6 930.7M2502.6 539.4L2121.3 935.1M2516.3 543.8L2135 939.6M2530 548.3L2148.7 944M2543.7 552.7L2162.4 948.4M2557.4 557.2L2176.1 952.8M2571.1 561.6L2189.8 957.2M2584.8 566.1L2203.5 961.7M2598.5 570.5L2217.1 966.1M2612.2 575L2230.8 970.5M2625.9 579.4L2244.5 974.9M2639.6 583.8L2258.2 979.3M2653.3 588.3L2271.9 983.8M2667 592.7L2285.6 988.2M2680.7 597.2L2299.3 992.6M2694.4 601.6L2313 997M2708.1 606.1L2326.7 1001.4M2721.8 610.5L2340.4 1005.9M2735.5 615L2354.1 1010.3M2749.2 619.4L2367.8 1014.7M2762.9 623.8L2381.4 1019.1M2776.6 628.3L2395.1 1023.5M2790.3 632.7L2408.8 1028M2804 637.2L2422.5 1032.4M2817.7 641.6L2436.2 1036.8M2831.4 646.1L2449.9 1041.2M2845.1 650.5L2463.6 1045.6M2858.8 655L2477.3 1050.1M2872.5 659.4L2491 1054.5M2886.2 663.9L2504.7 1058.9M2899.9 668.3L2518.4 1063.3M2913.6 672.7L2532 1067.7M2927.3 677.2L2545.7 1072.2M2941 681.6L2559.4 1076.6M2954.7 686.1L2573.1 1081M2968.4 690.5L2586.8 1085.4M2982.1 695L2600.5 1089.8M2995.8 699.4L2614.2 1094.3M3009.5 703.9L2627.9 1098.7M3023.1 708.3L2641.6 1103.1M3036.8 712.7L2655.3 1107.5M3050.5 717.2L2669 1111.9M3064.2 721.6L2682.6 1116.4M3077.9 726.1L2696.3 1120.8M3091.6 730.5L2710 1125.2M3105.3 735L2723.7 1129.6M3119 739.4L2737.4 1134M3132.7 743.9L2751.1 1138.5M3146.4 748.3L2764.8 1142.9M3160.1 752.8L2778.5 1147.3M3173.8 757.2L2792.2 1151.7M3187.5 761.6L2805.9 1156.1M3201.2 766.1L2819.6 1160.6M3214.9 770.5L2833.3 1165M3228.6 775L2846.9 1169.4M3242.3 779.4L2860.6 1173.8M3256 783.9L2874.3 1178.2M3269.7 788.3L2888 1182.7M3283.4 792.8L2901.7 1187.1M3297.1 797.2L2915.4 1191.5M2201.3 441.6L3297.1 797.2M2193.5 449.7L3289.3 805.2M2185.7 457.8L3281.5 813.3M2178 465.9L3273.7 821.3M2170.2 474L3265.9 829.4M2162.4 482L3258.2 837.4M2154.6 490.1L3250.4 845.5M2146.8 498.2L3242.6 853.5M2139.1 506.3L3234.8 861.6M2131.3 514.4L3227 869.6M2123.5 522.5L3219.2 877.7M2115.7 530.6L3211.4 885.7M2107.9 538.7L3203.6 893.8M2100.2 546.7L3195.8 901.8M2092.4 554.8L3188 909.9M2084.6 562.9L3180.3 917.9M2076.8 571L3172.5 926M2069 579.1L3164.7 934M2061.3 587.2L3156.9 942M2053.5 595.3L3149.1 950.1M2045.7 603.4L3141.3 958.1M2037.9 611.4L3133.5 966.2M2030.1 619.5L3125.7 974.2M2022.4 627.6L3117.9 982.3M2014.6 635.7L3110.1 990.3M2006.8 643.8L3102.4 998.4M1999 651.9L3094.6 1006.4M1991.3 660L3086.8 1014.5M1983.5 668.1L3079 1022.5M1975.7 676.1L3071.2 1030.6M1967.9 684.2L3063.4 1038.6M1960.1 692.3L3055.6 1046.7M1952.4 700.4L3047.8 1054.7M1944.6 708.5L3040 1062.7M1936.8 716.6L3032.2 1070.8M1929 724.7L3024.5 1078.8M1921.2 732.8L3016.7 1086.9M1913.5 740.8L3008.9 1094.9M1905.7 748.9L3001.1 1103M1897.9 757L2993.3 1111M1890.1 765.1L2985.5 1119.1M1882.3 773.2L2977.7 1127.1M1874.6 781.3L2969.9 1135.2M1866.8 789.4L2962.1 1143.2M1859 797.5L2954.3 1151.3M1851.2 805.5L2946.6 1159.3M1843.4 813.6L2938.8 1167.4M1835.7 821.7L2931 1175.4M1827.9 829.8L2923.2 1183.5M1820.1 837.9L2915.4 1191.5" stroke="#00003c" stroke-width="1.05" fill="none"/>
<path d="M2338.3 486.1L1957 882.1M2475.2 530.5L2093.9 926.3M2612.2 575L2230.8 970.5M2749.2 619.4L2367.8 1014.7M2886.2 663.9L2504.7 1058.9M3023.1 708.3L2641.6 1103.1M3160.1 752.8L2778.5 1147.3M2125.1 520.9L3220.8 876.1M2048.8 600.1L3144.4 954.9M1972.6 679.4L3068.1 1033.8M1896.3 758.6L2991.7 1112.6" stroke="#ecd2cc" stroke-width="1" fill="none" opacity="0.9"/>
</g>
<rect x="1666.5" y="5.4" width="1647.8" height="1757" fill="none" stroke="#000" stroke-width="2.8"/>
<rect x="1669" y="53.8" width="25" height="113.3" fill="#0c1ca6"/>
<rect x="1669" y="166.8" width="25" height="113.3" fill="#0000ff"/>
<rect x="1669" y="279.7" width="25" height="113.3" fill="#0055ff"/>
<rect x="1669" y="392.7" width="25" height="113.3" fill="#00aaff"/>
<rect x="1669" y="505.7" width="25" height="113.3" fill="#00d0ff"/>
<rect x="1669" y="618.6" width="25" height="113.3" fill="#17dcc0"/>
<rect x="1669" y="731.6" width="25" height="113.3" fill="#00fa8a"/>
<rect x="1669" y="844.6" width="25" height="113.3" fill="#2af53a"/>
<rect x="1669" y="957.6" width="25" height="113.3" fill="#66fa00"/>
<rect x="1669" y="1070.5" width="25" height="113.3" fill="#aafa0a"/>
<rect x="1669" y="1183.5" width="25" height="113.3" fill="#ffff00"/>
<rect x="1669" y="1296.5" width="25" height="113.3" fill="#ffa500"/>
<rect x="1669" y="1409.4" width="25" height="113.3" fill="#ff5500"/>
<rect x="1669" y="1522.4" width="25" height="113.3" fill="#ff0000"/>
<rect x="1669" y="1635.4" width="25" height="113.3" fill="#dc0a64"/>
<g font-size="12.4" fill="#000">
<text x="1695.7" y="58.1">-2.1448</text>
<text x="1695.7" y="171.1">-1.1713</text>
<text x="1695.7" y="284">-0.1978</text>
<text x="1695.7" y="397">0.7756</text>
<text x="1695.7" y="510">1.7491</text>
<text x="1695.7" y="622.9">2.7226</text>
<text x="1695.7" y="735.9">3.6961</text>
<text x="1695.7" y="848.9">4.6695</text>
<text x="1695.7" y="961.9">5.643</text>
<text x="1695.7" y="1074.8">6.6165</text>
<text x="1695.7" y="1187.8">7.59</text>
<text x="1695.7" y="1300.8">8.5634</text>
<text x="1695.7" y="1413.7">9.5369</text>
<text x="1695.7" y="1526.7">10.5104</text>
<text x="1695.7" y="1639.7">11.4839</text>
<text x="1695.7" y="1752.6">12.4573</text>
</g>
<text x="1669.8" y="19" font-size="12.6" fill="#3a3a3a" textLength="263" lengthAdjust="spacingAndGlyphs">Döşeme sonuçları - F12 : 0.9G'+Ey'-0.3Ex'-0.3Ez</text>
<text x="1669.8" y="38.7" font-size="13.4" fill="#000" textLength="33" lengthAdjust="spacingAndGlyphs">[tf/m]</text>
<rect x="3262.1" y="4" width="17.9" height="15.9" fill="#2e2e2e"/>
<rect x="3262.9" y="4.8" width="15.5" height="13.7" fill="#fff"/>
<rect x="3264.1" y="6" width="14.3" height="12.5" fill="#d3d3d3"/>
<rect x="3280" y="4" width="17.9" height="15.9" fill="#2e2e2e"/>
<rect x="3280.8" y="4.8" width="15.5" height="13.7" fill="#fff"/>
<rect x="3282" y="6" width="14.3" height="12.5" fill="#d3d3d3"/>
<rect x="3297.9" y="4" width="17.9" height="15.9" fill="#2e2e2e"/>
<rect x="3298.7" y="4.8" width="15.5" height="13.7" fill="#fff"/>
<rect x="3299.9" y="6" width="14.3" height="12.5" fill="#d3d3d3"/>
<path d="M3264.7 6.6h13l-6 6v3.4l-2 1.6v-5z" fill="none" stroke="#111" stroke-width="1.2"/>
<path d="M3287.2 9.3l2.2-2.6v10" fill="none" stroke="#111" stroke-width="1.3"/>
<path d="M3301.5 16.6l5-9.4 5 9.4" fill="none" stroke="#111" stroke-width="1.2"/>
<rect x="0" y="0" width="3319" height="1.2" fill="#dde1e9"/><rect x="0" y="1.1" width="3319" height="2.1" fill="#a7adb9"/>
<rect x="0" y="3.4" width="1" height="1760" fill="#eef0fa"/>
<rect x="1660.9" y="3.4" width="1.2" height="1760" fill="#a4abbd"/><rect x="1662.7" y="3.4" width="1.4" height="1760" fill="#b4bacb"/>
<rect x="3317.5" y="3.4" width="2" height="1760" fill="#d9dde5"/>
</svg></body></html>
